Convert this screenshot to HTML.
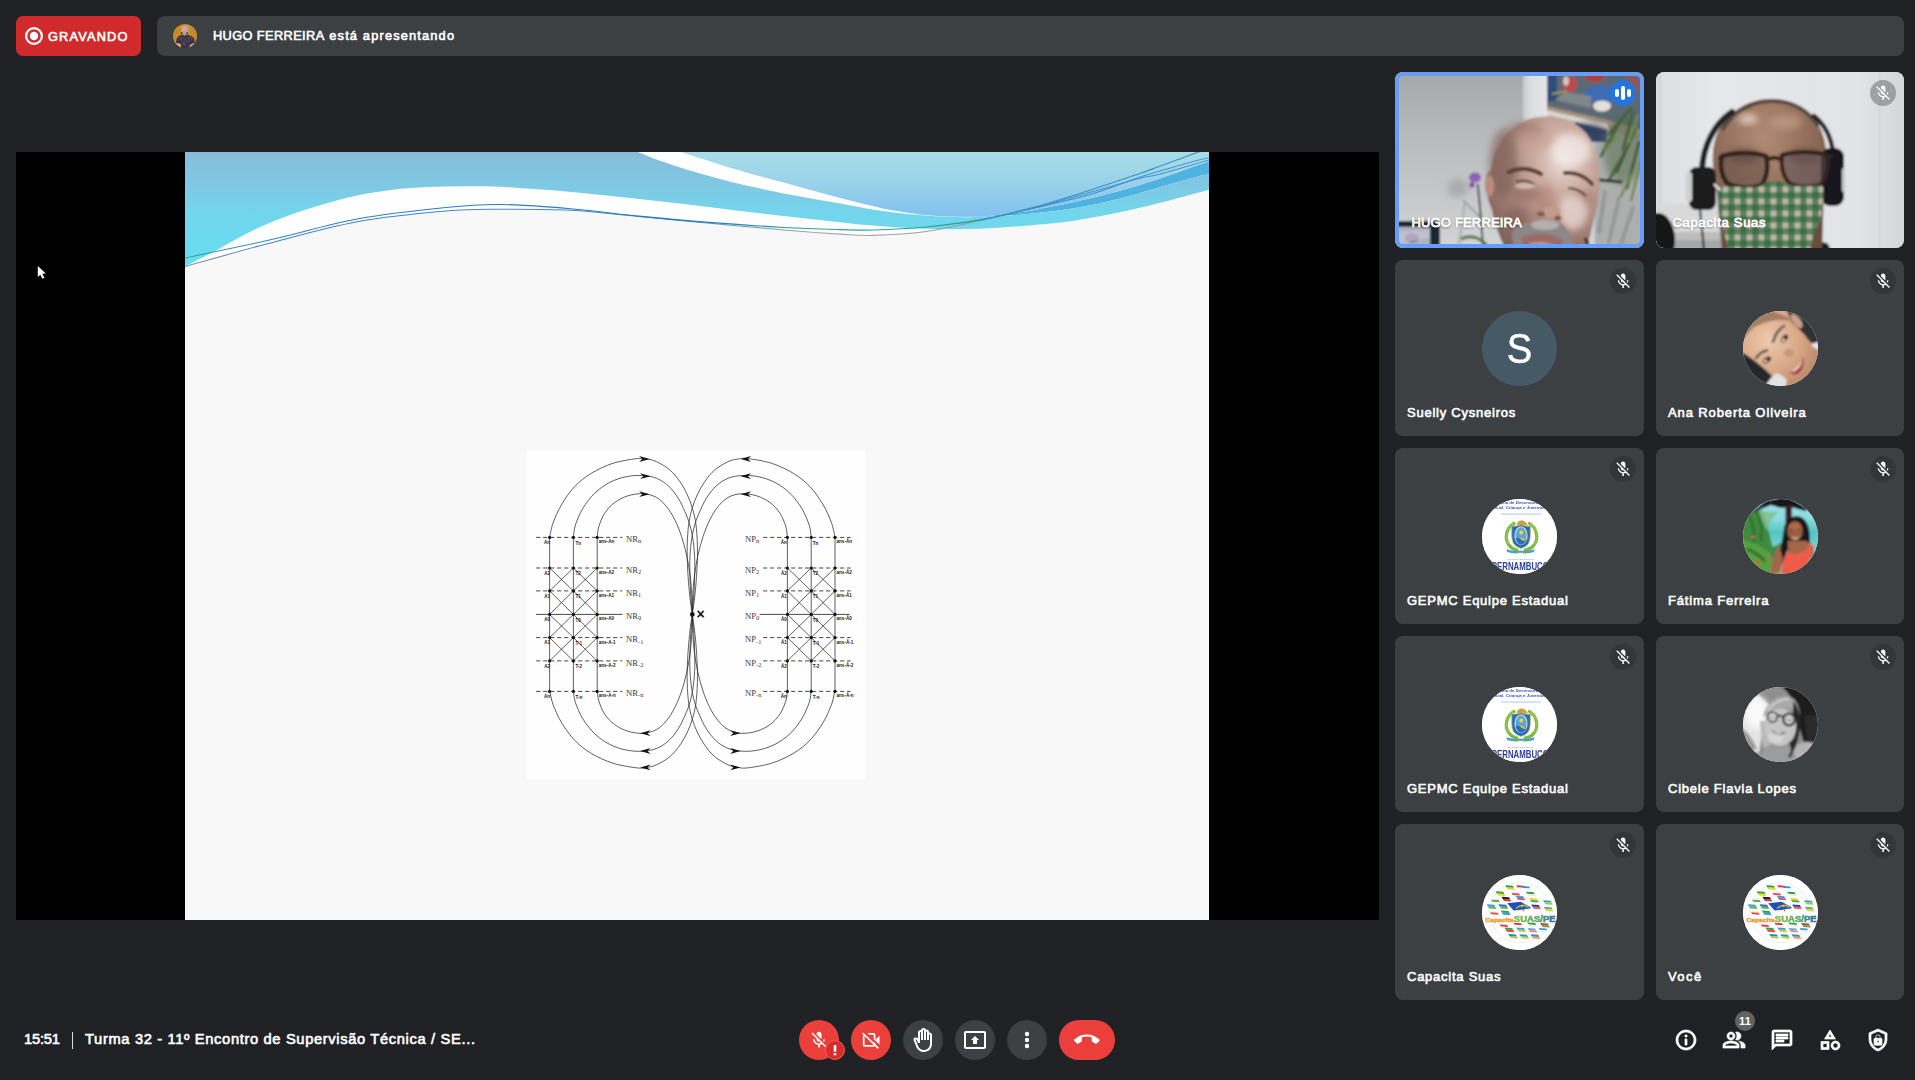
<!DOCTYPE html>
<html lang="pt-BR">
<head>
<meta charset="utf-8">
<title>Meet - Turma 32</title>
<style>
*{box-sizing:border-box;margin:0;padding:0}
html,body{width:1915px;height:1080px;overflow:hidden;background:#202124}
body{position:relative;font-family:"Liberation Sans",sans-serif;color:#fff;-webkit-font-smoothing:antialiased}
.abs{position:absolute}
.med{-webkit-text-stroke:0.6px currentColor}
/* top bar */
#rec{left:16px;top:16px;width:125px;height:40px;background:#d02a2c;border-radius:7px}
#rec svg{position:absolute;left:9px;top:11px}
#rec span{position:absolute;left:32px;top:11.8px;font-size:12.8px;line-height:18px;white-space:nowrap}
#pres{left:157px;top:16px;width:1747px;height:40px;background:#3c4043;border-radius:8px}
#pres .av{position:absolute;left:16px;top:8px;width:24px;height:24px;border-radius:50%;overflow:hidden}
#pres>span{position:absolute;left:56px;top:10.8px;font-size:12.8px;line-height:18px;white-space:nowrap}
/* main */
#main{left:16px;top:152px;width:1363px;height:768px;background:#000;overflow:hidden}
#slide{position:absolute;left:169.4px;top:0;width:1024px;height:768px;background:#f8f8f9}
/* tiles */
.tile.c2{width:248px}
.tile.c2 .avt{left:86.5px}
.tile{position:absolute;width:248.8px;height:176px;border-radius:8px;background:#3c4043;overflow:hidden}
.tile .nm{position:absolute;left:12px;bottom:14.5px;font-size:13px;line-height:18px;white-space:nowrap;color:#fff}
.tile .mic{position:absolute;right:7.5px;top:8px;width:26px;height:26px;border-radius:50%;background:rgba(32,33,36,.32)}
.tile .mic svg{position:absolute;left:3.9px;top:3.9px}
.tile .avt{position:absolute;left:87px;top:50.5px;width:75px;height:75px;border-radius:50%;overflow:hidden;background:#fff}
.tile .avt svg{display:block}
.tile .ini{position:absolute;left:0;top:0;width:75px;height:75px;line-height:75.4px;text-align:center;font-size:43.4px;color:#fff;transform:scaleX(.88);-webkit-text-stroke:.5px #fff}
.tile.vid{background:#d8d8da}
.tile .vn{left:16.5px;bottom:16.4px;-webkit-text-stroke:.85px #fff;text-shadow:0 1px 2px rgba(0,0,0,.6),0 0 2px rgba(0,0,0,.3)}
.tile .ring{position:absolute;inset:0;border:4px solid #669df6;border-radius:8px}
.tile .spk{position:absolute;right:7.5px;top:8px;width:26px;height:26px;border-radius:50%;background:#2675df}
.tile .spk i{position:absolute;width:4px;border-radius:2px;background:#fff}
.tile .spk i:nth-child(1){left:5px;top:9px;height:8px}
.tile .spk i:nth-child(2){left:11px;top:6px;height:14px}
.tile .spk i:nth-child(3){left:17px;top:9px;height:8px}
/* bottom */
#clock{left:24px;top:1029.4px;font-size:14.7px;line-height:20px;white-space:nowrap}
#sep{left:72px;top:1032px;width:1px;height:17px;background:#dadce0}
#title{left:85px;top:1029.4px;font-size:14.7px;line-height:20px;white-space:nowrap}
.cb{position:absolute;top:1020px;width:40px;height:40px;border-radius:50%;background:#3c4043}
.cb.red{background:#ea3f3b}
.cb svg{position:absolute;left:8px;top:8px}
.ri{position:absolute;top:1028px;width:24px;height:24px}
.ri path{stroke:#fff;stroke-width:.7;stroke-linejoin:round}
.cb svg path,.cb svg circle{stroke-linejoin:round}
</style>
</head>
<body>

<!-- TOP BAR -->
<div id="rec" class="abs">
<svg width="18" height="18" viewBox="0 0 18 18"><circle cx="9" cy="9" r="7.9" fill="none" stroke="#fff" stroke-width="2.2"/><circle cx="9" cy="9" r="4.2" fill="#fff"/></svg>
<span class="med" style="letter-spacing:1.16px">GRAVANDO</span>
</div>
<div id="pres" class="abs">
<div class="av"><svg width="24" height="24" viewBox="0 0 24 24" style="display:block;filter:blur(.45px)"><rect width="24" height="24" fill="#c68a2a"/><rect x="14.500" y="1" width="2.500" height="10" fill="#b89a58"/><ellipse cx="11.500" cy="5.800" rx="3.300" ry="4.300" fill="#d6a493"/><ellipse cx="11.600" cy="8.800" rx="2.600" ry="2" fill="#a8a4a2"/><path d="M8.500 8L9 10M14.500 8L14 10" stroke="#2a2222" stroke-width="1"/><path d="M3.500 15C5 12 8 11 9.500 10.500L11.500 12L13.800 10.500C16 11 20 12 21.500 15.500L22 19L17 21L16 24H8L7.500 20L3 19Z" fill="#3a3446"/><path d="M6 14L9 16M12 15L15 18M16 13L19 15M9 19L13 21" stroke="#7a4a6a" stroke-width="1"/><path d="M8 13L10 14M14 13L17 17M10 17L12 19" stroke="#3a6a58" stroke-width=".900"/><path d="M3 19L7.500 20L8 24H5Z" fill="#e0a98c"/><path d="M17 21L22 18.500L21 22L16.500 24Z" fill="#e0a98c"/></svg></div>
<span class="med"><span style="letter-spacing:0.376px">HUGO FERREIRA</span><span style="letter-spacing:1.171px"> está apresentando</span></span>
</div>

<!-- MAIN PRESENTATION -->
<div id="main" class="abs">
<div id="slide"><svg width="1024" height="768" viewBox="0 0 1024 768" style="display:block;position:absolute;left:0;top:0">
<defs>
<linearGradient id="gA" x1="0" y1="0" x2="0" y2="1"><stop offset="0" stop-color="#87bcda"/><stop offset=".3" stop-color="#7fc9e4"/><stop offset=".55" stop-color="#72d6ec"/><stop offset="1" stop-color="#66def2"/></linearGradient>
<linearGradient id="gA2" x1="0" y1="0" x2="1" y2="0"><stop offset="0" stop-color="#66def2" stop-opacity=".0"/><stop offset=".55" stop-color="#78d2ea" stop-opacity=".0"/><stop offset="1" stop-color="#82d0e8" stop-opacity=".5"/></linearGradient>
<linearGradient id="gB" x1="0" y1="0" x2="0" y2="1"><stop offset="0" stop-color="#a9dee7"/><stop offset=".5" stop-color="#98d1ea"/><stop offset="1" stop-color="#82c1ef"/></linearGradient>
<linearGradient id="gL" x1="0" y1="0" x2="1" y2="0"><stop offset="0" stop-color="#2fa58f"/><stop offset=".12" stop-color="#2f7fc4"/><stop offset=".5" stop-color="#2a78c0"/><stop offset=".66" stop-color="#25b08a"/><stop offset=".8" stop-color="#2a9a9c"/><stop offset="1" stop-color="#3a8fd0"/></linearGradient>
<linearGradient id="gL2" x1="0" y1="0" x2="1" y2="0"><stop offset="0" stop-color="#8a8f94"/><stop offset=".1" stop-color="#3b82c4"/><stop offset=".5" stop-color="#4a8fcb"/><stop offset=".62" stop-color="#a9a6a6"/><stop offset=".76" stop-color="#9a9a9e"/><stop offset=".84" stop-color="#3a86c8"/><stop offset="1" stop-color="#4a9ad6"/></linearGradient>
</defs>
<rect width="1024" height="768" fill="#f8f8f9"/>
<path d="M0.0 0.0L1024.0 0.0L1024.0 5.7L1024.0 5.7C1021.7 6.2 1021.0 6.0 1010.1 9.0C999.2 12.0 975.6 18.4 958.3 23.9C941.0 29.4 924.9 36.6 906.4 42.0C887.9 47.4 866.3 52.0 847.6 56.5C828.9 61.0 812.1 65.0 794.4 68.8C776.6 72.6 758.9 77.1 741.1 79.5C723.4 81.9 702.3 83.0 687.9 83.4C673.5 83.8 669.5 83.0 654.6 82.1C639.7 81.2 619.8 79.8 598.6 78.0C577.4 76.2 551.3 73.7 527.6 71.5C503.9 69.3 480.3 67.0 456.6 64.8C432.9 62.6 409.3 59.6 385.6 58.3C361.9 57.1 335.4 57.2 314.6 57.3C293.8 57.4 284.6 56.9 260.9 59.0C237.2 61.1 201.8 64.3 172.2 69.7C142.6 75.1 112.1 84.0 83.4 91.5C54.7 99.0 13.9 110.7 0.0 114.5L0.0 114.5Z" fill="#fefefe"/>
<path d="M764.6 64.6C769.6 64.6 783.5 65.1 794.4 64.5C805.3 63.9 819.9 62.3 829.9 61.0C839.9 59.7 844.0 58.9 854.6 56.9C865.2 54.9 880.5 52.0 893.5 49.1C906.5 46.2 919.4 43.0 932.4 39.4C945.4 35.9 958.4 32.0 971.3 27.8C984.3 23.6 1001.3 17.1 1010.1 14.1C1018.9 11.1 1021.7 10.3 1024.0 9.6L1024.0 21.9C1021.7 22.5 1018.9 22.8 1010.1 25.2C1001.3 27.6 984.3 32.5 971.3 36.2C958.4 39.9 945.4 44.0 932.4 47.2C919.4 50.4 906.5 53.3 893.5 55.6C880.5 57.9 865.2 59.6 854.6 60.8C844.0 62.0 839.9 62.3 829.9 63.0C819.9 63.7 806.2 64.7 794.4 65.0C782.6 65.3 764.8 64.7 758.9 64.6Z" fill="#4fb3e1"/>
<path d="M0.0 0.0L453.1 0.0C456.7 1.4 464.9 5.1 474.4 8.4C483.9 11.7 498.1 16.5 509.9 20.0C521.7 23.5 533.6 26.7 545.4 29.7C557.2 32.6 569.0 35.2 580.9 37.7C592.8 40.2 604.5 42.6 616.5 44.8C628.5 47.0 640.8 48.9 652.6 51.0C664.5 53.1 675.9 55.7 687.6 57.5C699.3 59.3 710.7 60.8 722.6 62.0C734.5 63.2 746.9 64.1 758.9 64.6C770.9 65.1 782.6 65.3 794.4 65.0C806.2 64.7 819.9 63.7 829.9 63.0C839.9 62.3 844.0 62.0 854.6 60.8C865.2 59.6 880.5 57.9 893.5 55.6C906.5 53.3 919.4 50.4 932.4 47.2C945.4 44.0 958.4 39.9 971.3 36.2C984.3 32.5 1001.3 27.6 1010.1 25.2C1018.9 22.8 1021.7 22.5 1024.0 21.9L1024.0 37.7C1021.7 38.3 1018.9 39.1 1010.1 41.4C1001.3 43.7 984.3 48.5 971.3 51.7C958.4 54.9 945.4 58.1 932.4 60.8C919.4 63.5 906.5 66.0 893.5 67.9C880.5 69.9 871.1 71.0 854.6 72.5C838.1 74.0 813.3 76.1 794.4 76.8C775.5 77.5 758.9 77.3 741.1 76.8C723.4 76.3 705.6 75.1 687.9 73.6C670.1 72.1 652.4 69.8 634.6 67.9C616.8 66.0 598.7 64.1 580.9 62.0C563.1 59.9 545.4 57.6 527.6 55.5C509.9 53.4 492.1 51.3 474.4 49.3C456.6 47.3 438.9 45.4 421.1 43.6C403.4 41.8 385.6 39.8 367.9 38.3C350.1 36.8 329.5 35.4 314.6 34.7C299.7 34.0 290.5 34.1 278.6 34.2C266.7 34.2 255.0 34.4 243.2 35.0C231.4 35.6 219.4 36.3 207.6 37.7C195.8 39.1 184.0 41.1 172.2 43.6C160.4 46.1 148.4 49.3 136.6 52.8C124.7 56.3 112.9 60.0 101.1 64.4C89.3 68.9 77.4 73.7 65.6 79.5C53.8 85.3 41.0 93.2 30.1 99.0C19.2 104.8 5.0 111.9 0.0 114.5Z" fill="url(#gA)"/>
<path d="M495.7 0.0C501.0 1.7 516.4 6.7 527.6 10.2C538.9 13.7 551.4 17.5 563.2 20.9C575.1 24.3 586.8 27.3 598.7 30.6C610.6 33.9 622.7 37.3 634.6 40.5C646.5 43.7 658.3 46.9 670.1 49.8C681.9 52.7 693.8 55.8 705.6 58.0C717.4 60.2 731.3 62.0 741.1 63.1C750.9 64.2 755.7 64.4 764.6 64.6C773.5 64.8 783.5 65.1 794.4 64.5C805.3 63.9 819.9 62.3 829.9 61.0C839.9 59.7 844.0 58.9 854.6 56.9C865.2 54.9 880.5 52.0 893.5 49.1C906.5 46.2 919.4 43.0 932.4 39.4C945.4 35.9 958.4 32.0 971.3 27.8C984.3 23.6 1001.3 17.1 1010.1 14.1C1018.9 11.1 1021.7 10.3 1024.0 9.6L1024.0 0.0Z" fill="url(#gB)"/>
<path d="M0.0 114.5C13.9 110.7 54.7 99.0 83.4 91.5C112.1 84.0 142.6 75.1 172.2 69.7C201.8 64.3 237.2 61.1 260.9 59.0C284.6 56.9 293.8 57.4 314.6 57.3C335.4 57.2 361.9 57.1 385.6 58.3C409.3 59.6 432.9 62.6 456.6 64.8C480.3 67.0 503.9 69.3 527.6 71.5C551.3 73.7 577.4 76.2 598.6 78.0C619.8 79.8 639.7 81.2 654.6 82.1C669.5 83.0 673.5 83.8 687.9 83.4C702.3 83.0 723.4 81.9 741.1 79.5C758.9 77.1 776.6 72.6 794.4 68.8C812.1 65.0 828.9 61.0 847.6 56.5C866.3 52.0 887.9 47.4 906.4 42.0C924.9 36.6 941.0 29.4 958.3 23.9C975.6 18.4 999.2 12.0 1010.1 9.0C1021.0 6.0 1021.7 6.2 1024.0 5.7" fill="none" stroke="url(#gL2)" stroke-width="1.1"/>
<path d="M0.0 106.0C13.9 103.0 54.7 94.8 83.4 88.3C112.1 81.8 142.6 72.5 172.2 67.0C201.8 61.5 237.2 57.9 260.9 55.5C284.6 53.1 293.8 52.3 314.6 52.5C335.4 52.7 361.9 54.7 385.6 56.7C409.3 58.7 432.9 62.1 456.6 64.4C480.3 66.7 503.9 68.8 527.6 70.6C551.3 72.4 577.4 74.3 598.6 75.5C619.8 76.7 639.7 77.2 654.6 77.6C669.5 78.0 673.5 78.4 687.9 78.0C702.3 77.6 723.4 76.7 741.1 75.0C758.9 73.3 776.6 71.2 794.4 67.9C812.1 64.7 829.9 60.2 847.6 55.5C865.4 50.8 883.1 45.1 900.9 39.5C918.7 33.9 941.9 25.9 954.2 21.7C966.5 17.5 965.3 17.7 974.6 14.3C983.9 10.9 1003.3 3.6 1010.1 1.2C1016.9 -1.2 1014.4 0.2 1015.3 0.0" fill="none" stroke="url(#gL)" stroke-width="1.1"/>
<path d="M794.4 68.5C803.3 66.5 829.9 60.7 847.6 56.2C865.4 51.7 883.1 46.4 900.9 41.5C918.7 36.6 941.9 29.7 954.2 26.5C966.5 23.3 963.0 25.3 974.6 22.2C986.2 19.1 1015.8 10.4 1024.0 8.0" fill="none" stroke="#3f8fd2" stroke-width="1"/>
<rect x="341.6" y="298.3" width="339" height="329" fill="#fefefe"/>
<g fill="none" stroke="#2b2b2b" stroke-width=".75" stroke-linecap="round">
<path d="M364.6 385.4C365.2 383.1 366.0 376.7 367.9 371.3C369.9 365.9 372.7 359.1 376.3 353.0C379.9 346.9 384.6 339.9 389.6 334.7C394.6 329.4 399.9 325.2 406.3 321.3C412.7 317.4 420.4 313.8 427.9 311.3C435.4 308.9 445.7 307.4 451.3 306.7C456.8 305.9 457.9 306.5 461.3 307.0C464.7 307.5 467.7 307.8 471.6 309.7C475.5 311.5 481.0 314.7 484.9 318.0C488.8 321.3 492.0 325.5 494.9 329.7C497.9 333.8 500.4 338.6 502.4 343.0C504.5 347.4 506.0 351.6 507.4 356.3C508.8 361.1 509.9 365.2 510.8 371.3C511.6 377.4 512.2 385.2 512.4 393.0C512.6 400.8 512.4 409.7 511.9 418.0C511.5 426.3 510.7 435.6 509.9 443.0C509.2 450.4 507.7 459.2 507.3 462.4"/>
<path d="M388.4 385.4C388.7 383.3 388.8 377.8 390.4 373.0C392.0 368.2 394.7 361.6 397.9 356.3C401.1 351.1 405.2 345.6 409.6 341.3C414.0 337.0 419.3 333.3 424.6 330.5C429.9 327.7 435.7 325.8 441.3 324.7C446.8 323.5 452.9 323.2 457.9 323.5C463.0 323.8 467.4 324.6 471.6 326.3C475.8 328.1 479.7 330.5 483.3 333.8C486.9 337.2 490.5 342.0 493.3 346.3C496.0 350.6 498.0 355.2 499.9 359.7C501.9 364.1 503.5 368.0 504.9 373.0C506.3 378.0 507.5 383.6 508.3 389.7C509.1 395.8 509.6 402.2 509.8 409.7C509.9 417.2 509.7 425.9 509.3 434.7C508.9 443.5 507.6 457.8 507.3 462.4"/>
<path d="M412.2 385.4C412.5 383.6 412.5 378.7 413.8 374.7C415.0 370.7 417.0 365.4 419.6 361.3C422.2 357.3 425.7 353.4 429.6 350.5C433.5 347.6 438.2 345.3 442.9 343.8C447.7 342.4 453.2 341.4 457.9 341.7C462.7 341.9 467.7 343.3 471.6 345.5C475.5 347.7 478.5 350.9 481.6 354.7C484.7 358.4 487.4 363.0 489.9 368.0C492.4 373.0 494.7 378.8 496.6 384.7C498.5 390.5 500.2 396.6 501.6 403.0C503.0 409.4 504.2 416.3 505.1 423.0C506.0 429.7 506.4 436.4 506.8 443.0C507.1 449.6 507.2 459.2 507.3 462.4"/>
<path d="M364.6 538.2C365.2 540.6 366.0 546.8 367.9 552.1C369.9 557.4 372.7 564.1 376.3 570.2C379.9 576.2 384.6 583.0 389.6 588.2C394.6 593.4 399.9 597.5 406.3 601.4C412.7 605.2 420.4 608.8 427.9 611.2C435.4 613.6 445.7 615.1 451.3 615.8C456.8 616.5 457.9 616.0 461.3 615.5C464.7 615.0 467.7 614.6 471.6 612.8C475.5 611.0 481.0 607.9 484.9 604.6C488.8 601.4 492.0 597.2 494.9 593.1C497.9 589.0 500.4 584.4 502.4 580.0C504.5 575.6 506.0 571.5 507.4 566.9C508.8 562.2 509.9 558.1 510.8 552.1C511.6 546.1 512.2 538.4 512.4 530.8C512.6 523.1 512.4 514.3 511.9 506.1C511.5 497.9 510.7 488.8 509.9 481.5C509.2 474.2 507.7 465.6 507.3 462.4"/>
<path d="M388.4 538.2C388.7 540.3 388.8 545.7 390.4 550.5C392.0 555.2 394.7 561.7 397.9 566.9C401.1 572.1 405.2 577.4 409.6 581.7C414.0 585.9 419.3 589.6 424.6 592.3C429.9 595.1 435.7 596.9 441.3 598.1C446.8 599.2 452.9 599.5 457.9 599.2C463.0 598.9 467.4 598.1 471.6 596.4C475.8 594.7 479.7 592.3 483.3 589.0C486.9 585.8 490.5 581.0 493.3 576.7C496.0 572.5 498.0 568.0 499.9 563.6C501.9 559.2 503.5 555.4 504.9 550.5C506.3 545.5 507.5 540.1 508.3 534.0C509.1 528.0 509.6 521.7 509.8 514.3C509.9 507.0 509.7 498.4 509.3 489.7C508.9 481.1 507.6 467.0 507.3 462.4"/>
<path d="M412.2 538.2C412.5 540.0 412.5 544.9 413.8 548.8C415.0 552.8 417.0 558.0 419.6 562.0C422.2 565.9 425.7 569.7 429.6 572.6C433.5 575.5 438.2 577.7 442.9 579.2C447.7 580.6 453.2 581.6 457.9 581.3C462.7 581.0 467.7 579.7 471.6 577.5C475.5 575.4 478.5 572.2 481.6 568.5C484.7 564.8 487.4 560.3 489.9 555.4C492.4 550.5 494.7 544.7 496.6 539.0C498.5 533.2 500.2 527.2 501.6 520.9C503.0 514.6 504.2 507.8 505.1 501.2C506.0 494.6 506.4 488.0 506.8 481.5C507.1 475.0 507.2 465.6 507.3 462.4"/>
<path d="M650.0 385.4C649.4 383.1 648.6 376.7 646.7 371.3C644.7 365.9 641.9 359.1 638.3 353.0C634.7 346.9 630.0 339.9 625.0 334.7C620.0 329.4 614.7 325.2 608.3 321.3C601.9 317.4 594.2 313.8 586.7 311.3C579.2 308.9 568.9 307.4 563.3 306.7C557.8 305.9 556.7 306.5 553.3 307.0C549.9 307.5 546.9 307.8 543.0 309.7C539.1 311.5 533.6 314.7 529.7 318.0C525.8 321.3 522.6 325.5 519.7 329.7C516.8 333.8 514.3 338.6 512.2 343.0C510.1 347.4 508.6 351.6 507.2 356.3C505.8 361.1 504.7 365.2 503.8 371.3C503.0 377.4 502.4 385.2 502.2 393.0C502.0 400.8 502.3 409.7 502.7 418.0C503.1 426.3 503.9 435.6 504.7 443.0C505.4 450.4 506.9 459.2 507.3 462.4"/>
<path d="M626.2 385.4C625.9 383.3 625.8 377.8 624.2 373.0C622.6 368.2 619.9 361.6 616.7 356.3C613.5 351.1 609.4 345.6 605.0 341.3C600.6 337.0 595.3 333.3 590.0 330.5C584.7 327.7 578.9 325.8 573.3 324.7C567.8 323.5 561.7 323.2 556.7 323.5C551.6 323.8 547.2 324.6 543.0 326.3C538.8 328.1 534.9 330.5 531.3 333.8C527.7 337.2 524.1 342.0 521.3 346.3C518.6 350.6 516.6 355.2 514.7 359.7C512.7 364.1 511.1 368.0 509.7 373.0C508.3 378.0 507.1 383.6 506.3 389.7C505.5 395.8 505.0 402.2 504.8 409.7C504.7 417.2 504.9 425.9 505.3 434.7C505.7 443.5 507.0 457.8 507.3 462.4"/>
<path d="M602.4 385.4C602.1 383.6 602.1 378.7 600.8 374.7C599.6 370.7 597.6 365.4 595.0 361.3C592.4 357.3 588.9 353.4 585.0 350.5C581.1 347.6 576.4 345.3 571.7 343.8C566.9 342.4 561.4 341.4 556.7 341.7C551.9 341.9 546.9 343.3 543.0 345.5C539.1 347.7 536.1 350.9 533.0 354.7C529.9 358.4 527.2 363.0 524.7 368.0C522.2 373.0 519.9 378.8 518.0 384.7C516.1 390.5 514.4 396.6 513.0 403.0C511.6 409.4 510.4 416.3 509.5 423.0C508.6 429.7 508.2 436.4 507.8 443.0C507.5 449.6 507.4 459.2 507.3 462.4"/>
<path d="M650.0 538.2C649.4 540.6 648.6 546.8 646.7 552.1C644.7 557.4 641.9 564.1 638.3 570.2C634.7 576.2 630.0 583.0 625.0 588.2C620.0 593.4 614.7 597.5 608.3 601.4C601.9 605.2 594.2 608.8 586.7 611.2C579.2 613.6 568.9 615.1 563.3 615.8C557.8 616.5 556.7 616.0 553.3 615.5C549.9 615.0 546.9 614.6 543.0 612.8C539.1 611.0 533.6 607.9 529.7 604.6C525.8 601.4 522.6 597.2 519.7 593.1C516.8 589.0 514.3 584.4 512.2 580.0C510.1 575.6 508.6 571.5 507.2 566.9C505.8 562.2 504.7 558.1 503.8 552.1C503.0 546.1 502.4 538.4 502.2 530.8C502.0 523.1 502.3 514.3 502.7 506.1C503.1 497.9 503.9 488.8 504.7 481.5C505.4 474.2 506.9 465.6 507.3 462.4"/>
<path d="M626.2 538.2C625.9 540.3 625.8 545.7 624.2 550.5C622.6 555.2 619.9 561.7 616.7 566.9C613.5 572.1 609.4 577.4 605.0 581.7C600.6 585.9 595.3 589.6 590.0 592.3C584.7 595.1 578.9 596.9 573.3 598.1C567.8 599.2 561.7 599.5 556.7 599.2C551.6 598.9 547.2 598.1 543.0 596.4C538.8 594.7 534.9 592.3 531.3 589.0C527.7 585.8 524.1 581.0 521.3 576.7C518.6 572.5 516.6 568.0 514.7 563.6C512.7 559.2 511.1 555.4 509.7 550.5C508.3 545.5 507.1 540.1 506.3 534.0C505.5 528.0 505.0 521.7 504.8 514.3C504.7 507.0 504.9 498.4 505.3 489.7C505.7 481.1 507.0 467.0 507.3 462.4"/>
<path d="M602.4 538.2C602.1 540.0 602.1 544.9 600.8 548.8C599.6 552.8 597.6 558.0 595.0 562.0C592.4 565.9 588.9 569.7 585.0 572.6C581.1 575.5 576.4 577.7 571.7 579.2C566.9 580.6 561.4 581.6 556.7 581.3C551.9 581.0 546.9 579.7 543.0 577.5C539.1 575.4 536.1 572.2 533.0 568.5C529.9 564.8 527.2 560.3 524.7 555.4C522.2 550.5 519.9 544.7 518.0 539.0C516.1 533.2 514.4 527.2 513.0 520.9C511.6 514.6 510.4 507.8 509.5 501.2C508.6 494.6 508.2 488.0 507.8 481.5C507.5 475.0 507.4 465.6 507.3 462.4"/>
<path d="M412.2 385.4V539.4"/>
<path d="M388.4 385.4V539.4"/>
<path d="M364.6 385.4V539.4"/>
<path d="M412.2 416.0L388.4 438.9M388.4 416.0L412.2 438.9"/>
<path d="M388.4 416.0L364.6 438.9M364.6 416.0L388.4 438.9"/>
<path d="M412.2 438.9L388.4 462.4M388.4 438.9L412.2 462.4"/>
<path d="M388.4 438.9L364.6 462.4M364.6 438.9L388.4 462.4"/>
<path d="M412.2 462.4L388.4 485.6M388.4 462.4L412.2 485.6"/>
<path d="M388.4 462.4L364.6 485.6M364.6 462.4L388.4 485.6"/>
<path d="M412.2 485.6L388.4 508.9M388.4 485.6L412.2 508.9"/>
<path d="M388.4 485.6L364.6 508.9M364.6 485.6L388.4 508.9"/>
<path d="M602.4 385.4V539.4"/>
<path d="M626.2 385.4V539.4"/>
<path d="M650.0 385.4V539.4"/>
<path d="M602.4 416.0L626.2 438.9M626.2 416.0L602.4 438.9"/>
<path d="M626.2 416.0L650.0 438.9M650.0 416.0L626.2 438.9"/>
<path d="M602.4 438.9L626.2 462.4M626.2 438.9L602.4 462.4"/>
<path d="M626.2 438.9L650.0 462.4M650.0 438.9L626.2 462.4"/>
<path d="M602.4 462.4L626.2 485.6M626.2 462.4L602.4 485.6"/>
<path d="M626.2 462.4L650.0 485.6M650.0 462.4L626.2 485.6"/>
<path d="M602.4 485.6L626.2 508.9M626.2 485.6L602.4 508.9"/>
<path d="M626.2 485.6L650.0 508.9M650.0 485.6L626.2 508.9"/>
</g>
<g fill="none" stroke="#3c3c3c" stroke-width=".95" stroke-dasharray="4.2 2.8">
<path d="M351.1 385.4H437.1"/>
<path d="M578.1 385.4H665.6"/>
<path d="M351.1 416.0H437.1"/>
<path d="M578.1 416.0H665.6"/>
<path d="M351.1 438.9H437.1"/>
<path d="M578.1 438.9H665.6"/>
<path d="M351.1 485.6H437.1"/>
<path d="M578.1 485.6H665.6"/>
<path d="M351.1 508.9H437.1"/>
<path d="M578.1 508.9H665.6"/>
<path d="M351.1 539.4H437.1"/>
<path d="M578.1 539.4H665.6"/>
</g>
<g fill="none" stroke="#333" stroke-width=".9"><path d="M351.1 462.4H437.6"/><path d="M574.6 462.4H664.6"/></g>
<g fill="#111">
<circle cx="412.2" cy="385.4" r="1.55"/>
<circle cx="412.2" cy="416.0" r="1.55"/>
<circle cx="412.2" cy="438.9" r="1.55"/>
<circle cx="412.2" cy="462.4" r="1.55"/>
<circle cx="412.2" cy="485.6" r="1.55"/>
<circle cx="412.2" cy="508.9" r="1.55"/>
<circle cx="412.2" cy="539.4" r="1.55"/>
<circle cx="388.4" cy="385.4" r="1.55"/>
<circle cx="388.4" cy="416.0" r="1.55"/>
<circle cx="388.4" cy="438.9" r="1.55"/>
<circle cx="388.4" cy="462.4" r="1.55"/>
<circle cx="388.4" cy="485.6" r="1.55"/>
<circle cx="388.4" cy="508.9" r="1.55"/>
<circle cx="388.4" cy="539.4" r="1.55"/>
<circle cx="364.6" cy="385.4" r="1.55"/>
<circle cx="364.6" cy="416.0" r="1.55"/>
<circle cx="364.6" cy="438.9" r="1.55"/>
<circle cx="364.6" cy="462.4" r="1.55"/>
<circle cx="364.6" cy="485.6" r="1.55"/>
<circle cx="364.6" cy="508.9" r="1.55"/>
<circle cx="364.6" cy="539.4" r="1.55"/>
<circle cx="602.4" cy="385.4" r="1.55"/>
<circle cx="602.4" cy="416.0" r="1.55"/>
<circle cx="602.4" cy="438.9" r="1.55"/>
<circle cx="602.4" cy="462.4" r="1.55"/>
<circle cx="602.4" cy="485.6" r="1.55"/>
<circle cx="602.4" cy="508.9" r="1.55"/>
<circle cx="602.4" cy="539.4" r="1.55"/>
<circle cx="626.2" cy="385.4" r="1.55"/>
<circle cx="626.2" cy="416.0" r="1.55"/>
<circle cx="626.2" cy="438.9" r="1.55"/>
<circle cx="626.2" cy="462.4" r="1.55"/>
<circle cx="626.2" cy="485.6" r="1.55"/>
<circle cx="626.2" cy="508.9" r="1.55"/>
<circle cx="626.2" cy="539.4" r="1.55"/>
<circle cx="650.0" cy="385.4" r="1.55"/>
<circle cx="650.0" cy="416.0" r="1.55"/>
<circle cx="650.0" cy="438.9" r="1.55"/>
<circle cx="650.0" cy="462.4" r="1.55"/>
<circle cx="650.0" cy="485.6" r="1.55"/>
<circle cx="650.0" cy="508.9" r="1.55"/>
<circle cx="650.0" cy="539.4" r="1.55"/>
<circle cx="507.3" cy="462.4" r="2.3"/>
</g>
<path d="M464.6 307.0l-10.5 -2.9l3.2 2.9l-3.2 2.9z" fill="#111"/>
<path d="M555.6 307.0l10.5 -2.9l-3.2 2.9l3.2 2.9z" fill="#111"/>
<path d="M455.1 615.4l10.5 -2.9l-3.2 2.9l3.2 2.9z" fill="#111"/>
<path d="M555.6 615.4l-10.5 -2.9l3.2 2.9l-3.2 2.9z" fill="#111"/>
<path d="M465.6 324.2l-10.5 -2.9l3.2 2.9l-3.2 2.9z" fill="#111"/>
<path d="M555.6 324.2l10.5 -2.9l-3.2 2.9l3.2 2.9z" fill="#111"/>
<path d="M455.1 599.0l10.5 -2.9l-3.2 2.9l3.2 2.9z" fill="#111"/>
<path d="M555.6 599.0l-10.5 -2.9l3.2 2.9l-3.2 2.9z" fill="#111"/>
<path d="M464.6 342.2l-10.5 -2.9l3.2 2.9l-3.2 2.9z" fill="#111"/>
<path d="M555.6 342.2l10.5 -2.9l-3.2 2.9l3.2 2.9z" fill="#111"/>
<path d="M455.1 581.2l10.5 -2.9l-3.2 2.9l3.2 2.9z" fill="#111"/>
<path d="M555.6 581.2l-10.5 -2.9l3.2 2.9l-3.2 2.9z" fill="#111"/>
<g font-family="'Liberation Serif',serif" font-size="8.6" fill="#3a3a3a">
<text x="441.1" y="390.0">NR<tspan font-size="6.4" dy="1.4">n</tspan></text>
<text x="560.1" y="390.0">NP<tspan font-size="6.4" dy="1.4">n</tspan></text>
<text x="441.1" y="420.6">NR<tspan font-size="6.4" dy="1.4">2</tspan></text>
<text x="560.1" y="420.6">NP<tspan font-size="6.4" dy="1.4">2</tspan></text>
<text x="441.1" y="443.5">NR<tspan font-size="6.4" dy="1.4">1</tspan></text>
<text x="560.1" y="443.5">NP<tspan font-size="6.4" dy="1.4">1</tspan></text>
<text x="441.1" y="467.0">NR<tspan font-size="6.4" dy="1.4">0</tspan></text>
<text x="560.1" y="467.0">NP<tspan font-size="6.4" dy="1.4">0</tspan></text>
<text x="441.1" y="490.2">NR<tspan font-size="6.4" dy="1.4">-1</tspan></text>
<text x="560.1" y="490.2">NP<tspan font-size="6.4" dy="1.4">-1</tspan></text>
<text x="441.1" y="513.5">NR<tspan font-size="6.4" dy="1.4">-2</tspan></text>
<text x="560.1" y="513.5">NP<tspan font-size="6.4" dy="1.4">-2</tspan></text>
<text x="441.1" y="544.0">NR<tspan font-size="6.4" dy="1.4">-n</tspan></text>
<text x="560.1" y="544.0">NP<tspan font-size="6.4" dy="1.4">-n</tspan></text>
</g>
<g font-family="'Liberation Sans',sans-serif" font-size="4.6" font-weight="bold" fill="#222">
<text x="365.1" y="392.0" text-anchor="end">An</text>
<text x="390.4" y="392.8">Tn</text>
<text x="413.7" y="391.4">ans-An</text>
<text x="601.9" y="392.0" text-anchor="end">Ān</text>
<text x="627.7" y="392.8">Tn</text>
<text x="651.5" y="391.4">ans-Ān</text>
<text x="365.1" y="422.6" text-anchor="end">A2</text>
<text x="390.4" y="423.4">T2</text>
<text x="413.7" y="422.0">ans-A2</text>
<text x="601.9" y="422.6" text-anchor="end">Ā2</text>
<text x="627.7" y="423.4">T2</text>
<text x="651.5" y="422.0">ans-Ā2</text>
<text x="365.1" y="445.5" text-anchor="end">A1</text>
<text x="390.4" y="446.3">T1</text>
<text x="413.7" y="444.9">ans-A1</text>
<text x="601.9" y="445.5" text-anchor="end">Ā1</text>
<text x="627.7" y="446.3">T1</text>
<text x="651.5" y="444.9">ans-Ā1</text>
<text x="365.1" y="469.0" text-anchor="end">A0</text>
<text x="390.4" y="469.8">T0</text>
<text x="413.7" y="468.4">ans-A0</text>
<text x="601.9" y="469.0" text-anchor="end">Ā0</text>
<text x="627.7" y="469.8">T0</text>
<text x="651.5" y="468.4">ans-Ā0</text>
<text x="365.1" y="492.2" text-anchor="end">A1</text>
<text x="390.4" y="493.0">T-1</text>
<text x="413.7" y="491.6">ans-A-1</text>
<text x="601.9" y="492.2" text-anchor="end">Ā1</text>
<text x="627.7" y="493.0">T-1</text>
<text x="651.5" y="491.6">ans-Ā-1</text>
<text x="365.1" y="515.5" text-anchor="end">A2</text>
<text x="390.4" y="516.3">T-2</text>
<text x="413.7" y="514.9">ans-A-2</text>
<text x="601.9" y="515.5" text-anchor="end">Ā2</text>
<text x="627.7" y="516.3">T-2</text>
<text x="651.5" y="514.9">ans-Ā-2</text>
<text x="365.1" y="546.0" text-anchor="end">An</text>
<text x="390.4" y="546.8">T-n</text>
<text x="413.7" y="545.4">ans-A-n</text>
<text x="601.9" y="546.0" text-anchor="end">Ān</text>
<text x="627.7" y="546.8">T-n</text>
<text x="651.5" y="545.4">ans-Ā-n</text>
</g>
<text x="511.6" y="467.0" font-family="'Liberation Sans',sans-serif" font-size="14" font-weight="bold" fill="#111">×</text>
</svg></div>
<svg class="abs" style="left:16px;top:108px;filter:blur(.3px)" width="20" height="24" viewBox="16 108 20 24"><path d="M21.800 114L21.800 125L24.300 122.700L26.400 126.800L28.400 125.800L26.300 121.800L29.800 121.600Z" fill="#fff"/></svg>
</div>

<!-- TILES -->
<div class="tile vid" style="left:1395px;top:72px"><svg class="abs" style="left:0;top:0" width="248.500" height="176" viewBox="0 0 248.500 176">
<defs>
<filter id="hb1" x="-10%" y="-10%" width="120%" height="120%"><feGaussianBlur stdDeviation="1.100"/></filter>
<filter id="hb3" x="-30%" y="-30%" width="160%" height="160%"><feGaussianBlur stdDeviation="3.500"/></filter>
<filter id="hb6" x="-40%" y="-40%" width="180%" height="180%"><feGaussianBlur stdDeviation="7"/></filter>
<linearGradient id="hw" x1="0" y1="0" x2="0" y2="1"><stop offset="0" stop-color="#a5a6a7"/><stop offset=".45" stop-color="#bcbebf"/><stop offset="1" stop-color="#d3d5d7"/></linearGradient>
<linearGradient id="hp" x1="0" y1="0" x2="1" y2="0"><stop offset="0" stop-color="#c9cacc"/><stop offset=".3" stop-color="#dcdde0"/><stop offset="1" stop-color="#e6e6ea"/></linearGradient>
<radialGradient id="hs" cx=".68" cy=".32" r=".8"><stop offset="0" stop-color="#ece0dd"/><stop offset=".28" stop-color="#cfb0a5"/><stop offset=".6" stop-color="#ad897d"/><stop offset="1" stop-color="#7d6058"/></radialGradient>
<clipPath id="hc"><rect x="0" y="0" width="248.500" height="176" rx="8"/></clipPath>
</defs>
<g clip-path="url(#hc)">
<g filter="url(#hb1)">
<rect x="-5" y="-5" width="260" height="186" fill="url(#hw)"/>
<rect x="200" y="40" width="55" height="140" fill="#adaeae"/>
<rect x="128" y="-5" width="25" height="186" fill="url(#hp)"/>
<!-- painting -->
<path d="M152 -5H255V70L212 56L152 42Z" fill="#5b6975"/>
<path d="M152 34L212 48L255 60V70L212 57L152 43Z" fill="#a8937f"/>
<path d="M152 38L212 52L214 57L152 43Z" fill="#d9d6d0"/>
<rect x="153" y="2" width="9" height="27" fill="#2d4d7c"/>
<ellipse cx="175" cy="12" rx="7" ry="8" fill="#c0474a"/>
<ellipse cx="171" cy="9" rx="3" ry="5" fill="#d9c4c0"/>
<ellipse cx="200" cy="4" rx="10" ry="6" fill="#b33b3b"/>
<ellipse cx="206" cy="22" rx="17" ry="9" fill="#3d6cb3"/>
<ellipse cx="207" cy="34" rx="9" ry="5.500" fill="#e3dfda"/>
<path d="M160 28L196 36L196 24L170 20Z" fill="#80868a"/>
<path d="M157 22L172 19" stroke="#b9a13a" stroke-width="1.500"/>
<rect x="232" y="0" width="16" height="20" fill="#8a5a58"/>
<path d="M180 50L212 58V70H184Z" fill="#39476a"/>
<!-- plants right -->
<ellipse cx="228" cy="78" rx="20" ry="34" fill="#566a50" opacity=".55" filter="url(#hb3)"/>
<ellipse cx="196" cy="58" rx="14" ry="7" fill="#2c3a5c" opacity=".6" filter="url(#hb3)"/>
<g fill="none" stroke="#44603a" stroke-width="3" stroke-linecap="round">
<path d="M236 36L214 62M238 40L228 78M226 48L206 84M240 58L222 100M244 70L232 116M230 80L214 108"/>
</g>
<g fill="none" stroke="#6c8a4c" stroke-width="2.500" stroke-linecap="round">
<path d="M243 44L234 70M246 90L236 128M238 100L226 124M222 64L210 78"/>
</g>
<path d="M205 108L226 110" stroke="#2c3430" stroke-width="3" stroke-linecap="round"/>
<g fill="none" stroke="#8d8f8f" stroke-width="4" stroke-linecap="round" opacity=".7"><path d="M210 120L204 160M224 126L214 170M238 136L226 172"/></g>
<!-- orchid and shadow -->
<ellipse cx="63" cy="116" rx="11" ry="9" fill="#a9abad" filter="url(#hb3)"/>
<path d="M70 130L64 172" stroke="#b4b6b8" stroke-width="3"/>
<path d="M68 128L86 146" stroke="#8f8a90" stroke-width="1.200"/>
<path d="M82.500 112C85 130 86 150 88 174" stroke="#3a3040" stroke-width="1.800" fill="none"/>
<ellipse cx="80" cy="105.500" rx="6" ry="5" fill="#8d62b8"/>
<ellipse cx="77" cy="113" rx="2.500" ry="3" fill="#7a52a6"/>
<path d="M66 167C76 162 86 166 92 174" stroke="#56703f" stroke-width="3" fill="none"/>
<!-- frame bottom-left -->
<rect x="2" y="149" width="43" height="30" fill="#1d2535"/>
<rect x="2" y="155" width="33" height="24" fill="#aeb4c2"/>
<ellipse cx="17" cy="166" rx="7" ry="5" fill="#8d6f96"/>
<path d="M2 160L34 158L34 166L2 172Z" fill="#c9ccd6" opacity=".6"/>
<!-- head -->
<path d="M96 98C97 84 104 66 118 56C130 47 142 44 152 44.500C166 45 180 49 190 60C198 69 203 84 204 98C205 112 204 128 200 142C198 152 195 162 191 180H112C106 168 100 154 97 138C93 128 90 118 91 106C92 101 94 99 96 98Z" fill="url(#hs)"/>
<ellipse cx="108" cy="92" rx="14" ry="34" fill="#7d5f57" opacity=".6" filter="url(#hb3)"/><ellipse cx="128" cy="60" rx="20" ry="10" fill="#8d6e64" opacity=".5" filter="url(#hb3)"/><ellipse cx="132" cy="122" rx="16" ry="8" fill="#8a6258" opacity=".5" filter="url(#hb3)"/><ellipse cx="186" cy="126" rx="12" ry="6" fill="#8a6258" opacity=".45" filter="url(#hb3)"/><ellipse cx="122" cy="148" rx="12" ry="14" fill="#7a5a52" opacity=".5" filter="url(#hb3)"/>
<ellipse cx="94.500" cy="114" rx="4.500" ry="11" fill="#b98a80"/>
<ellipse cx="176" cy="78" rx="20" ry="16" fill="#f4ebe8" opacity=".75" filter="url(#hb3)"/>
<ellipse cx="178" cy="140" rx="14" ry="18" fill="#efe2de" opacity=".7" filter="url(#hb3)"/>
<ellipse cx="140" cy="68" rx="18" ry="10" fill="#c9a496" opacity=".6" filter="url(#hb3)"/>
<!-- brows/eyes -->
<path d="M114 100C124 95 136 96 146 102" stroke="#5a3d36" stroke-width="4.200" fill="none" stroke-linecap="round"/>
<path d="M170 101C180 100 190 104 197 112" stroke="#5a3d36" stroke-width="3.800" fill="none" stroke-linecap="round"/>
<path d="M121 110C127 108 134 109 139 112" stroke="#4f3631" stroke-width="2" fill="none"/>
<path d="M173 116C180 116 186 119 191 124" stroke="#4f3631" stroke-width="2" fill="none"/>
<ellipse cx="130" cy="114" rx="10" ry="3" fill="#e0c6bc" opacity=".7"/>
<!-- nose -->
<ellipse cx="150" cy="128" rx="9" ry="16" fill="#b48578" opacity=".6" filter="url(#hb3)"/>
<ellipse cx="157" cy="140" rx="9" ry="6" fill="#c59a8e"/>
<ellipse cx="146" cy="142" rx="4" ry="2.200" fill="#7d564f"/>
<ellipse cx="163" cy="146" rx="3.500" ry="2.500" fill="#7d564f"/>
<!-- moustache/beard -->
<path d="M118 158C130 148 150 146 164 150C172 154 176 162 178 174L172 180H122C118 172 116 164 118 158Z" fill="#8e8787"/>
<ellipse cx="150" cy="153" rx="14" ry="5" fill="#b5afae"/>
<path d="M126 166C138 160 156 160 168 168L166 180H130Z" fill="#9a6a68"/>
<path d="M134 172C144 168 156 170 164 176L164 180H134Z" fill="#c79a96"/>
<path d="M190 166C193 170 194 174 192 180" stroke="#2c2422" stroke-width="3" fill="none"/>
</g>
</g>
</svg><div class="ring"></div><div class="spk"><i></i><i></i><i></i></div><div class="nm vn med" style="letter-spacing:0.16px">HUGO FERREIRA</div></div>
<div class="tile vid c2" style="left:1656px;top:72px"><svg class="abs" style="left:0;top:0" width="248" height="176" viewBox="0 0 248 176">
<defs>
<filter id="cb1" x="-10%" y="-10%" width="120%" height="120%"><feGaussianBlur stdDeviation="1"/></filter>
<filter id="cb3" x="-30%" y="-30%" width="160%" height="160%"><feGaussianBlur stdDeviation="3.500"/></filter>
<linearGradient id="cw" x1="0" y1="0" x2="1" y2="0"><stop offset="0" stop-color="#dcdde1"/><stop offset=".25" stop-color="#e6e7eb"/><stop offset=".8" stop-color="#e2e3e7"/><stop offset="1" stop-color="#d4d5d9"/></linearGradient>
<radialGradient id="cs" cx=".45" cy=".25" r=".8"><stop offset="0" stop-color="#b08a74"/><stop offset=".4" stop-color="#98745f"/><stop offset="1" stop-color="#694c3e"/></radialGradient>
<pattern id="plaid" width="12" height="12" patternUnits="userSpaceOnUse"><rect width="12" height="12" fill="#e9e7de"/><rect x="0" y="0" width="6.800" height="12" fill="#2a6636" opacity=".68"/><rect x="0" y="0" width="12" height="6.800" fill="#2a6636" opacity=".68"/><rect x="9.200" y="0" width=".500" height="12" fill="#b8343c" opacity=".6"/><rect x="0" y="9.200" width="12" height=".500" fill="#b8343c" opacity=".6"/></pattern>
<clipPath id="cc"><rect x="0" y="0" width="248" height="176" rx="8"/></clipPath>
</defs>
<g clip-path="url(#cc)">
<g filter="url(#cb1)">
<rect x="-5" y="-5" width="260" height="186" fill="url(#cw)"/>
<rect x="3" y="-5" width="1.500" height="140" fill="#c9cace"/>
<rect x="223" y="-5" width="1.200" height="186" fill="#cfd0d4"/>
<!-- desk -->
<path d="M-5 132H66V180H-5Z" fill="#d9d9da"/>
<path d="M-5 160H66V168H-5Z" fill="#bdbdbe"/>
<path d="M-5 168H66V180H-5Z" fill="#a7a7a8"/>
<!-- shoulder dark -->
<ellipse cx="2" cy="168" rx="17" ry="27" fill="#121214"/>
<path d="M150 180C154 170 164 168 172 172L176 180Z" fill="#1a1a1c"/>
<!-- head -->
<path d="M60 112C55 92 55 70 65 54C75 38 94 27 114 27C138 27 154 38 163 54C172 70 172 94 168 116L166 180H66Z" fill="url(#cs)"/>
<path d="M66 58C76 40 96 29 116 29C138 29 154 40 162 54" fill="none" stroke="#4a3c38" stroke-width="4" opacity=".8"/>
<ellipse cx="92" cy="47" rx="10" ry="5" fill="#ecd6cc" opacity=".85" filter="url(#cb3)"/>
<ellipse cx="130" cy="50" rx="16" ry="7" fill="#c9a48e" opacity=".6" filter="url(#cb3)"/>
<ellipse cx="88" cy="84" rx="16" ry="7" fill="#5d4236" opacity=".7" filter="url(#cb3)"/>
<ellipse cx="148" cy="84" rx="16" ry="7" fill="#5d4236" opacity=".7" filter="url(#cb3)"/>
<!-- headphones -->
<path d="M46 98C47 74 58 52 76 40" fill="none" stroke="#222226" stroke-width="6" stroke-linecap="round"/>
<path d="M158 44C168 52 175 64 177 80" fill="none" stroke="#222226" stroke-width="4.500" stroke-linecap="round"/>
<rect x="33" y="95" width="27" height="43" rx="8" fill="#1c1c1f"/>
<rect x="30" y="100" width="6" height="30" rx="3" fill="#cfcfd2"/>
<rect x="165" y="76" width="23" height="58" rx="9" fill="#19191c"/>
<rect x="186" y="96" width="3" height="24" rx="1.500" fill="#c9c9cc"/>
<path d="M44 137C45 150 47 164 48 180" fill="none" stroke="#222" stroke-width="2"/>
<!-- glasses -->
<path d="M66 84C80 80 98 80 110 84C113 96 110 110 104 114C92 117 76 116 70 110C65 102 64 92 66 84Z" fill="#5f5048" opacity=".5"/>
<path d="M126 83C140 79 158 79 171 83C174 95 170 108 164 113C152 116 138 115 132 110C126 102 125 92 126 83Z" fill="#5f5560" opacity=".5"/>
<path d="M66 84C80 80 98 80 110 84C113 96 110 110 104 114C92 117 76 116 70 110C65 102 64 92 66 84Z" fill="none" stroke="#33231f" stroke-width="4.600"/>
<path d="M126 83C140 79 158 79 171 83C174 95 170 108 164 113C152 116 138 115 132 110C126 102 125 92 126 83Z" fill="none" stroke="#33231f" stroke-width="4"/>
<path d="M110 88C116 85 121 85 126 88" fill="none" stroke="#33231f" stroke-width="4"/>
<path d="M62 86L66 86M171 85L177 84" stroke="#33231f" stroke-width="4"/>
<!-- mask -->
<path d="M62 116C76 112 92 118 104 114C112 108 122 108 132 112C144 116 158 112 167 114C168 130 166 146 160 158C157 166 155 172 154 180H72C72 170 68 162 66 152C63 140 62 128 62 116Z" fill="url(#plaid)"/>
<path d="M62 116C76 112 92 118 104 114C112 108 122 108 132 112C144 116 158 112 167 114C168 130 166 146 160 158C157 166 155 172 154 180H72C72 170 68 162 66 152C63 140 62 128 62 116Z" fill="#2d5a34" opacity=".18"/>
<path d="M58 112L64 118" stroke="#f4f4f4" stroke-width="2"/>
</g>
</g>
</svg><div class="mic" style="right:8px"><svg width="18.2" height="18.2" viewBox="0 0 24 24"><path fill="#fff" d="M19 11h-1.7c0 .74-.16 1.43-.43 2.05l1.23 1.23c.56-.98.9-2.09.9-3.28zm-4.02.17c0-.06.02-.11.02-.17V5c0-1.66-1.34-3-3-3S9 3.34 9 5v.18l5.98 5.99zM4.27 3L3 4.27l6.01 6.01V11c0 1.66 1.33 3 2.99 3 .22 0 .44-.03.65-.08l1.66 1.66c-.71.33-1.5.52-2.31.52-2.76 0-5.3-2.1-5.3-5.1H5c0 3.41 2.72 6.23 6 6.72V21h2v-3.28c.91-.13 1.77-.45 2.54-.9L19.73 21 21 19.73 4.27 3z"/></svg></div><div class="nm vn med" style="letter-spacing:0.704px">Capacita Suas</div></div>
<div class="tile" style="left:1395px;top:260px"><div class="avt" style="background:#455a64"><span class="ini">S</span></div><div class="mic" style="right:7.5px"><svg width="18.2" height="18.2" viewBox="0 0 24 24"><path fill="#fff" d="M19 11h-1.7c0 .74-.16 1.43-.43 2.05l1.23 1.23c.56-.98.9-2.09.9-3.28zm-4.02.17c0-.06.02-.11.02-.17V5c0-1.66-1.34-3-3-3S9 3.34 9 5v.18l5.98 5.99zM4.27 3L3 4.27l6.01 6.01V11c0 1.66 1.33 3 2.99 3 .22 0 .44-.03.65-.08l1.66 1.66c-.71.33-1.5.52-2.31.52-2.76 0-5.3-2.1-5.3-5.1H5c0 3.41 2.72 6.23 6 6.72V21h2v-3.28c.91-.13 1.77-.45 2.54-.9L19.73 21 21 19.73 4.27 3z"/></svg></div><div class="nm med" style="letter-spacing:0.761px">Suelly Cysneiros</div></div>
<div class="tile c2" style="left:1656px;top:260px"><div class="avt"><svg width="75" height="75" viewBox="0 0 75 75"><defs><filter id="ab" x="-20%" y="-20%" width="140%" height="140%"><feGaussianBlur stdDeviation=".800"/></filter><radialGradient id="as" cx=".35" cy=".4" r=".75"><stop offset="0" stop-color="#efc9ae"/><stop offset=".5" stop-color="#d9a988"/><stop offset="1" stop-color="#b07f62"/></radialGradient></defs>
<g filter="url(#ab)"><rect x="-3" y="-3" width="81" height="81" fill="url(#as)"/>
<path d="M43 -3L49 12L60 22L68 32L78 35V-3Z" fill="#2f3236"/>
<ellipse cx="53.500" cy="10" rx="4" ry="8.500" transform="rotate(-38 53.500 10)" fill="#c9a08a"/>
<path d="M68 33L78 30V40L70 36Z" fill="#e6e6e8"/>
<path d="M10 -3C24 -2 38 2 50 10C40 8 26 8 12 16C6 20 2 26 -3 34V-3Z" fill="#8a6a50" opacity=".7"/>
<path d="M-3 40C8 46 20 56 30 66C26 70 22 74 20 78H-3Z" fill="#26282b"/>
<path d="M22 78C24 70 30 64 34 62C38 64 42 66 44 70L42 78Z" fill="#e3e3e4"/>
<path d="M30 31C32 24 36 18 41 15" stroke="#5a5252" stroke-width="2.600" fill="none" stroke-linecap="round"/>
<path d="M13 47C16 43 20 40 24 39.500" stroke="#5a5252" stroke-width="2.600" fill="none" stroke-linecap="round"/>
<ellipse cx="41.500" cy="27.500" rx="4.600" ry="2.600" transform="rotate(-50 41.500 27.500)" fill="#4a2c24"/>
<ellipse cx="40.500" cy="29" rx="1.600" ry="1.400" fill="#e8e4e4"/>
<ellipse cx="24" cy="49" rx="4.600" ry="2.600" transform="rotate(-35 24 49)" fill="#4a2c24"/>
<ellipse cx="22.500" cy="50" rx="1.600" ry="1.300" fill="#e8e4e4"/>
<ellipse cx="46" cy="42" rx="5" ry="4" fill="#b98868" opacity=".6"/>
<path d="M46 61C52 62 59 57 60 46C62 52 60 60 54 63C51 64 48 63 46 61Z" fill="#b3324a"/>
<path d="M49 59.500C53 58 57 54 59 49C58 55 54 59 50 60.500Z" fill="#f4ece6"/>
</g></svg></div><div class="mic" style="right:8px"><svg width="18.2" height="18.2" viewBox="0 0 24 24"><path fill="#fff" d="M19 11h-1.7c0 .74-.16 1.43-.43 2.05l1.23 1.23c.56-.98.9-2.09.9-3.28zm-4.02.17c0-.06.02-.11.02-.17V5c0-1.66-1.34-3-3-3S9 3.34 9 5v.18l5.98 5.99zM4.27 3L3 4.27l6.01 6.01V11c0 1.66 1.33 3 2.99 3 .22 0 .44-.03.65-.08l1.66 1.66c-.71.33-1.5.52-2.31.52-2.76 0-5.3-2.1-5.3-5.1H5c0 3.41 2.72 6.23 6 6.72V21h2v-3.28c.91-.13 1.77-.45 2.54-.9L19.73 21 21 19.73 4.27 3z"/></svg></div><div class="nm med" style="letter-spacing:0.897px">Ana Roberta Oliveira</div></div>
<div class="tile" style="left:1395px;top:448px"><div class="avt"><svg width="75" height="75" viewBox="0 0 75 75" style="filter:blur(.35px)"><rect width="75" height="75" fill="#fff"/>
<g font-family="'Liberation Sans',sans-serif" font-weight="bold" fill="#3c50b4" text-anchor="middle"><text x="37.500" y="4.500" font-size="4.400">Secretaria de Desenvolvimento</text><text x="37.500" y="9.800" font-size="4.400">Social, Criança e Juventude</text></g>
<rect x="19" y="14.600" width="40" height=".900" fill="#9cc6e6"/>
<g fill="none" stroke="#7cba3c" stroke-width="3.200" stroke-linecap="round"><path d="M32 24.500C24 29 22 40 27 46C29 49 32 50.500 35 51"/><path d="M47.500 24.500C55 29 57 40 52 46C50 49 46 50.500 43 51"/></g>
<g fill="none" stroke="#a5d468" stroke-width="1.200" stroke-dasharray="1.500 1.500"><path d="M31 25C23.500 30 22 40 27.500 46.500"/><path d="M48.500 25C55.500 30 57 40 51.500 46.500"/></g>
<path d="M34.500 26C35 22.500 38 21 39.500 21.500C42 21 45 24 46 26.500Z" fill="#c9a23a"/>
<path d="M29.800 27C33 27.500 36 26.800 39 25.500C42 26.800 45 27.500 48.300 27C48.300 33 49 40 46.500 44.500C44.500 47.500 41.500 48.500 39 49.500C36.500 48.500 33.500 47.500 31.500 44.500C29 40 29.800 33 29.800 27Z" fill="#1f6fc2" stroke="#e0b84c" stroke-width=".800"/>
<ellipse cx="39" cy="36.700" rx="6" ry="9" fill="#5aa6dc" stroke="#efe3b0" stroke-width="1.100"/>
<path d="M33.800 39C36 38 39 39.500 44.400 40.500C43.500 44 41.500 45.500 39 45.700C36.500 45.500 34.500 43 33.800 39Z" fill="#2a6ec0"/>
<path d="M37 38.500C39 40.500 41 42.500 44 42C43 40 41 38.500 37 38.500Z" fill="#e0c040"/>
<circle cx="39.300" cy="33.400" r="2" fill="#f2d640"/>
<path d="M24.500 50.200C30 52 35 52.400 38.500 51.500C42 52.400 47 52 52.500 50.200L52 53C47 54.500 42 54.600 38.500 53.800C35 54.600 30 54.500 25 53Z" fill="#4b9bdb"/>
<path d="M34 54.500L37 52.500M43 54.500L40 52.500" stroke="#7cba3c" stroke-width="1.400"/>
<text x="38.500" y="60.800" font-family="'Liberation Sans',sans-serif" font-size="1.900" fill="#5a7fc4" text-anchor="middle" textLength="26">GOVERNO DO ESTADO</text>
<text x="38.300" y="71.300" font-family="'Liberation Sans',sans-serif" font-weight="bold" font-size="11.400" fill="#2b3b9b" text-anchor="middle" textLength="57" lengthAdjust="spacingAndGlyphs">PERNAMBUCO</text>
</svg></div><div class="mic" style="right:7.5px"><svg width="18.2" height="18.2" viewBox="0 0 24 24"><path fill="#fff" d="M19 11h-1.7c0 .74-.16 1.43-.43 2.05l1.23 1.23c.56-.98.9-2.09.9-3.28zm-4.02.17c0-.06.02-.11.02-.17V5c0-1.66-1.34-3-3-3S9 3.34 9 5v.18l5.98 5.99zM4.27 3L3 4.27l6.01 6.01V11c0 1.66 1.33 3 2.99 3 .22 0 .44-.03.65-.08l1.66 1.66c-.71.33-1.5.52-2.31.52-2.76 0-5.3-2.1-5.3-5.1H5c0 3.41 2.72 6.23 6 6.72V21h2v-3.28c.91-.13 1.77-.45 2.54-.9L19.73 21 21 19.73 4.27 3z"/></svg></div><div class="nm med" style="letter-spacing:0.741px">GEPMC Equipe Estadual</div></div>
<div class="tile c2" style="left:1656px;top:448px"><div class="avt"><svg width="75" height="75" viewBox="0 0 75 75"><defs><filter id="fb" x="-20%" y="-20%" width="140%" height="140%"><feGaussianBlur stdDeviation=".900"/></filter><linearGradient id="fs" x1="0" y1="0" x2="0" y2="1"><stop offset="0" stop-color="#a5e2ea"/><stop offset=".28" stop-color="#8cdde0"/><stop offset=".45" stop-color="#55c4c4"/><stop offset=".7" stop-color="#86d8d4"/><stop offset="1" stop-color="#6cc8b0"/></linearGradient></defs>
<g filter="url(#fb)"><rect x="-3" y="-3" width="81" height="81" fill="url(#fs)"/>
<path d="M-3 20C4 14 10 10 16 8C20 14 24 22 26 34C28 40 28 44 30 48C34 46 38 44 40 43L36 58L30 78H-3Z" fill="#3f8a3c"/>
<path d="M12 10C18 12 26 14 36 12C30 18 26 24 24 32C20 24 16 16 12 10Z" fill="#7fbf8a" opacity=".8"/>
<path d="M6 16C10 24 12 34 10 44M14 12C18 22 20 32 18 42" stroke="#2f6f30" stroke-width="2.500" fill="none"/>
<path d="M-3 40C8 42 20 48 30 56L30 78H-3Z" fill="#56a040"/>
<path d="M4 50C10 52 16 56 22 62" stroke="#2f7030" stroke-width="3" fill="none"/>
<circle cx="10" cy="38" r="1.600" fill="#e06070"/><circle cx="15" cy="63" r="2" fill="#d84838"/><circle cx="27" cy="60" r="1.500" fill="#d84838"/>
<path d="M28 56C32 52 36 50 40 49L40 60L30 62Z" fill="#3f7f5a"/>
<!-- roof -->
<path d="M8 14L22 2L44 -3L66 10L62 12L48 8L38 9L28 6Z" fill="#17131a"/>
<rect x="42.500" y="6" width="6.500" height="18" fill="#3a1a1c"/>
<!-- hair -->
<path d="M41 30C42 20 50 16 56 17.500C63 19 66 27 66.500 34C67 40 66 43 68 46L56 50L44 52C42 58 40 64 37 68C34 62 36 54 38 48C39 42 40 36 41 30Z" fill="#16121a"/>
<!-- skin -->
<path d="M36 46C32 52 30 62 27 73L36 78L40 60Z" fill="#a4664a"/>
<path d="M47 44L62 42L70 46C72 50 71 56 69 60L60 52L46 54Z" fill="#a4664a"/>
<path d="M45 42H64V57H45Z" fill="#a4664a"/><ellipse cx="52" cy="32" rx="7.800" ry="10" fill="#9a5c40"/>
<ellipse cx="52" cy="28" rx="6" ry="4" fill="#b07050" opacity=".7"/>
<path d="M48.500 37.500C51 39.500 54.500 39.500 56.500 37C55 40.500 50 41 48.500 37.500Z" fill="#f0e6e0"/>
<path d="M47 31H50M54 30.500H57" stroke="#3a2018" stroke-width="1.200"/>
<!-- dress -->
<path d="M44 53C48 56 56 56 62 52L66 45L70 46C69 56 66 66 62 78H38C38 70 40 60 44 53Z" fill="#ee5b48"/>
<path d="M36 70C37 74 37 76 37 78H34Z" fill="#7ab848"/>
</g></svg></div><div class="mic" style="right:8px"><svg width="18.2" height="18.2" viewBox="0 0 24 24"><path fill="#fff" d="M19 11h-1.7c0 .74-.16 1.43-.43 2.05l1.23 1.23c.56-.98.9-2.09.9-3.28zm-4.02.17c0-.06.02-.11.02-.17V5c0-1.66-1.34-3-3-3S9 3.34 9 5v.18l5.98 5.99zM4.27 3L3 4.27l6.01 6.01V11c0 1.66 1.33 3 2.99 3 .22 0 .44-.03.65-.08l1.66 1.66c-.71.33-1.5.52-2.31.52-2.76 0-5.3-2.1-5.3-5.1H5c0 3.41 2.72 6.23 6 6.72V21h2v-3.28c.91-.13 1.77-.45 2.54-.9L19.73 21 21 19.73 4.27 3z"/></svg></div><div class="nm med" style="letter-spacing:0.828px">Fátima Ferreira</div></div>
<div class="tile" style="left:1395px;top:636px"><div class="avt"><svg width="75" height="75" viewBox="0 0 75 75" style="filter:blur(.35px)"><rect width="75" height="75" fill="#fff"/>
<g font-family="'Liberation Sans',sans-serif" font-weight="bold" fill="#3c50b4" text-anchor="middle"><text x="37.500" y="4.500" font-size="4.400">Secretaria de Desenvolvimento</text><text x="37.500" y="9.800" font-size="4.400">Social, Criança e Juventude</text></g>
<rect x="19" y="14.600" width="40" height=".900" fill="#9cc6e6"/>
<g fill="none" stroke="#7cba3c" stroke-width="3.200" stroke-linecap="round"><path d="M32 24.500C24 29 22 40 27 46C29 49 32 50.500 35 51"/><path d="M47.500 24.500C55 29 57 40 52 46C50 49 46 50.500 43 51"/></g>
<g fill="none" stroke="#a5d468" stroke-width="1.200" stroke-dasharray="1.500 1.500"><path d="M31 25C23.500 30 22 40 27.500 46.500"/><path d="M48.500 25C55.500 30 57 40 51.500 46.500"/></g>
<path d="M34.500 26C35 22.500 38 21 39.500 21.500C42 21 45 24 46 26.500Z" fill="#c9a23a"/>
<path d="M29.800 27C33 27.500 36 26.800 39 25.500C42 26.800 45 27.500 48.300 27C48.300 33 49 40 46.500 44.500C44.500 47.500 41.500 48.500 39 49.500C36.500 48.500 33.500 47.500 31.500 44.500C29 40 29.800 33 29.800 27Z" fill="#1f6fc2" stroke="#e0b84c" stroke-width=".800"/>
<ellipse cx="39" cy="36.700" rx="6" ry="9" fill="#5aa6dc" stroke="#efe3b0" stroke-width="1.100"/>
<path d="M33.800 39C36 38 39 39.500 44.400 40.500C43.500 44 41.500 45.500 39 45.700C36.500 45.500 34.500 43 33.800 39Z" fill="#2a6ec0"/>
<path d="M37 38.500C39 40.500 41 42.500 44 42C43 40 41 38.500 37 38.500Z" fill="#e0c040"/>
<circle cx="39.300" cy="33.400" r="2" fill="#f2d640"/>
<path d="M24.500 50.200C30 52 35 52.400 38.500 51.500C42 52.400 47 52 52.500 50.200L52 53C47 54.500 42 54.600 38.500 53.800C35 54.600 30 54.500 25 53Z" fill="#4b9bdb"/>
<path d="M34 54.500L37 52.500M43 54.500L40 52.500" stroke="#7cba3c" stroke-width="1.400"/>
<text x="38.500" y="60.800" font-family="'Liberation Sans',sans-serif" font-size="1.900" fill="#5a7fc4" text-anchor="middle" textLength="26">GOVERNO DO ESTADO</text>
<text x="38.300" y="71.300" font-family="'Liberation Sans',sans-serif" font-weight="bold" font-size="11.400" fill="#2b3b9b" text-anchor="middle" textLength="57" lengthAdjust="spacingAndGlyphs">PERNAMBUCO</text>
</svg></div><div class="mic" style="right:7.5px"><svg width="18.2" height="18.2" viewBox="0 0 24 24"><path fill="#fff" d="M19 11h-1.7c0 .74-.16 1.43-.43 2.05l1.23 1.23c.56-.98.9-2.09.9-3.28zm-4.02.17c0-.06.02-.11.02-.17V5c0-1.66-1.34-3-3-3S9 3.34 9 5v.18l5.98 5.99zM4.27 3L3 4.27l6.01 6.01V11c0 1.66 1.33 3 2.99 3 .22 0 .44-.03.65-.08l1.66 1.66c-.71.33-1.5.52-2.31.52-2.76 0-5.3-2.1-5.3-5.1H5c0 3.41 2.72 6.23 6 6.72V21h2v-3.28c.91-.13 1.77-.45 2.54-.9L19.73 21 21 19.73 4.27 3z"/></svg></div><div class="nm med" style="letter-spacing:0.741px">GEPMC Equipe Estadual</div></div>
<div class="tile c2" style="left:1656px;top:636px"><div class="avt"><svg width="75" height="75" viewBox="0 0 75 75"><defs><filter id="gb" x="-20%" y="-20%" width="140%" height="140%"><feGaussianBlur stdDeviation="1"/></filter><filter id="gb3" x="-40%" y="-40%" width="180%" height="180%"><feGaussianBlur stdDeviation="3"/></filter></defs>
<g filter="url(#gb)"><rect x="-3" y="-3" width="81" height="81" fill="#8e8e8e"/>
<path d="M-3 14L14 6L26 18L20 40L16 66L-3 60Z" fill="#e4e4e4"/>
<ellipse cx="14" cy="26" rx="12" ry="16" fill="#fafafa" filter="url(#gb3)"/>
<path d="M-3 40C4 44 10 52 14 62L6 64L-3 56Z" fill="#9a9a9a"/>
<path d="M36 -3H78V56L62 56C58 52 56 34 54 22C50 12 44 4 36 -3Z" fill="#1f1f1f"/>
<path d="M62 30C68 26 74 28 78 32V56H64Z" fill="#2c2c2c"/>
<!-- hair light -->
<path d="M20 30C22 18 32 8 44 9C52 10 56 18 57 28C52 22 44 20 36 22C28 24 24 28 20 30Z" fill="#a9a9a9"/>
<path d="M24 24C30 16 38 12 46 12" stroke="#d0d0d0" stroke-width="2" fill="none"/>
<path d="M17 34C18 44 18 56 22 64L28 58L22 34Z" fill="#b8b8b8"/>
<!-- dark hair right -->
<path d="M50 14C56 20 58 30 57 40C56 50 54 58 50 64L46 56C50 48 52 36 50 26Z" fill="#262626"/>
<!-- face -->
<path d="M22 32C24 24 34 20 42 22C50 24 54 32 53 42C52 52 46 58 38 59C30 60 24 54 22 46C21 42 21 36 22 32Z" fill="#c6c6c6"/>
<ellipse cx="33" cy="50" rx="8" ry="6" fill="#dadada" opacity=".8"/>
<!-- neck/shoulders -->
<path d="M24 58C30 62 42 62 48 58L52 66L60 70L56 78H14L18 68Z" fill="#9c9c9c"/>
<path d="M54 58C60 54 68 54 74 58L70 70L58 76L50 66Z" fill="#b4b4b4"/>
<path d="M48 58C50 62 50 66 46 70" stroke="#222" stroke-width="2.500" fill="none"/>
<!-- glasses -->
<circle cx="29.500" cy="30" r="4.800" fill="#d6d6d6" stroke="#2a2a2a" stroke-width="1.800"/>
<circle cx="46" cy="32.500" r="5.800" fill="#cfcfcf" stroke="#222" stroke-width="2.200"/>
<path d="M34 29C36 28 38 28.500 40.500 30" stroke="#222" stroke-width="1.800" fill="none"/>
<path d="M27 30.500H32M43 33H49" stroke="#777" stroke-width="1.200"/>
<!-- mouth -->
<path d="M28 43.500C32 45 38 46 43 45C41 49 32 49 28 43.500Z" fill="#3a3a3a"/>
<path d="M29.500 44.500C33 45.500 38 46 41.500 45.500C39 47.500 33 47.500 29.500 44.500Z" fill="#f2f2f2"/>
</g></svg></div><div class="mic" style="right:8px"><svg width="18.2" height="18.2" viewBox="0 0 24 24"><path fill="#fff" d="M19 11h-1.7c0 .74-.16 1.43-.43 2.05l1.23 1.23c.56-.98.9-2.09.9-3.28zm-4.02.17c0-.06.02-.11.02-.17V5c0-1.66-1.34-3-3-3S9 3.34 9 5v.18l5.98 5.99zM4.27 3L3 4.27l6.01 6.01V11c0 1.66 1.33 3 2.99 3 .22 0 .44-.03.65-.08l1.66 1.66c-.71.33-1.5.52-2.31.52-2.76 0-5.3-2.1-5.3-5.1H5c0 3.41 2.72 6.23 6 6.72V21h2v-3.28c.91-.13 1.77-.45 2.54-.9L19.73 21 21 19.73 4.27 3z"/></svg></div><div class="nm med" style="letter-spacing:0.768px">Cibele Flavia Lopes</div></div>
<div class="tile" style="left:1395px;top:824px"><div class="avt"><svg width="75" height="75" viewBox="0 0 75 75" style="filter:blur(.4px)"><rect width="75" height="75" fill="#fff"/>
<circle cx="37.500" cy="37.500" r="30" fill="none" stroke="#efefef" stroke-width="1"/>
<path d="M23.2 10.3L30.8 10.8L31.9 12.8L24.4 12.4Z" fill="#2f9a3c"/>
<path d="M24.4 12.4L31.9 12.8L33.0 14.9L25.6 14.4Z" fill="#f0d030"/>
<path d="M34.3 10.3L41.9 10.8L43.0 12.8L35.5 12.4Z" fill="#d8343c"/>
<path d="M35.5 12.4L43.0 12.8L44.1 14.9L36.7 14.4Z" fill="#f4f4f4"/>
<path d="M39.5 10.9L47.1 11.4L48.2 13.4L40.7 13.0Z" fill="#3a8fd0"/>
<path d="M40.7 13.0L48.2 13.4L49.3 15.5L41.9 15.0Z" fill="#f4f4f4"/>
<path d="M13.6 16.3L21.2 16.8L22.3 18.9L14.8 18.4Z" fill="#3aa03c"/>
<path d="M14.8 18.4L22.3 18.9L23.4 20.9L16.0 20.4Z" fill="#e8d820"/>
<path d="M28.4 15.9L36.0 16.4L37.1 18.4L29.6 18.0Z" fill="#f0f0f0"/>
<path d="M29.6 18.0L37.1 18.4L38.2 20.5L30.8 20.0Z" fill="#e04850"/>
<path d="M44.0 16.7L51.6 17.2L52.7 19.2L45.2 18.8Z" fill="#2f9a3c"/>
<path d="M45.2 18.8L52.7 19.2L53.8 21.3L46.4 20.8Z" fill="#e8f0e8"/>
<path d="M8.0 22.6L15.6 23.1L16.7 25.1L9.2 24.7Z" fill="#f2f2f2"/>
<path d="M9.2 24.7L16.7 25.1L17.8 27.2L10.4 26.7Z" fill="#58b050"/>
<path d="M19.5 21.8L27.1 22.3L28.2 24.4L20.7 23.9Z" fill="#202020"/>
<path d="M20.7 23.9L28.2 24.4L29.3 26.4L21.9 25.9Z" fill="#d8303a"/>
<path d="M33.6 20.7L41.2 21.2L42.3 23.2L34.8 22.8Z" fill="#3a9ae0"/>
<path d="M34.8 22.8L42.3 23.2L43.4 25.3L36.0 24.8Z" fill="#e85060"/>
<path d="M47.0 22.9L54.6 23.4L55.7 25.4L48.2 25.0Z" fill="#f0d020"/>
<path d="M48.2 25.0L55.7 25.4L56.8 27.5L49.4 27.0Z" fill="#4aa840"/>
<path d="M61.0 25.2L68.6 25.7L69.7 27.8L62.2 27.3Z" fill="#3a9ae0"/>
<path d="M62.2 27.3L69.7 27.8L70.8 29.8L63.4 29.3Z" fill="#a8c830"/>
<path d="M4.7 29.3L12.3 29.8L13.4 31.9L5.9 31.4Z" fill="#3a9ae0"/>
<path d="M5.9 31.4L13.4 31.9L14.5 33.9L7.1 33.4Z" fill="#6ab840"/>
<path d="M16.5 29.3L24.1 29.8L25.2 31.9L17.7 31.4Z" fill="#2a70c0"/>
<path d="M17.7 31.4L25.2 31.9L26.3 33.9L18.9 33.4Z" fill="#58b050"/>
<path d="M49.2 29.6L56.8 30.1L57.9 32.1L50.4 31.7Z" fill="#3040a0"/>
<path d="M50.4 31.7L57.9 32.1L59.0 34.2L51.6 33.7Z" fill="#e86070"/>
<path d="M61.8 31.8L69.4 32.3L70.5 34.4L63.0 33.9Z" fill="#58b0a0"/>
<path d="M63.0 33.9L70.5 34.4L71.6 36.4L64.2 35.9Z" fill="#e8d020"/>
<path d="M6.9 35.2L14.5 35.7L15.6 37.8L8.1 37.3Z" fill="#f0f0f0"/>
<path d="M8.1 37.3L15.6 37.8L16.7 39.8L9.3 39.3Z" fill="#e05040"/>
<path d="M18.8 35.6L26.4 36.1L27.5 38.1L20.0 37.7Z" fill="#38a048"/>
<path d="M20.0 37.7L27.5 38.1L28.6 40.2L21.2 39.7Z" fill="#38a0e0"/>
<path d="M16.5 47.5L24.1 48.0L25.2 50.0L17.7 49.6Z" fill="#f4f4f4"/>
<path d="M17.7 49.6L25.2 50.0L26.3 52.1L18.9 51.6Z" fill="#e04048"/>
<path d="M31.4 47.7L39.0 48.2L40.1 50.2L32.6 49.8Z" fill="#e03840"/>
<path d="M32.6 49.8L40.1 50.2L41.2 52.3L33.8 51.8Z" fill="#f0f0f0"/>
<path d="M45.5 47.5L53.1 48.0L54.2 50.0L46.7 49.6Z" fill="#2f9a3c"/>
<path d="M46.7 49.6L54.2 50.0L55.3 52.1L47.9 51.6Z" fill="#f0f0f0"/>
<path d="M58.1 48.0L65.7 48.5L66.8 50.5L59.3 50.1Z" fill="#d83840"/>
<path d="M59.3 50.1L66.8 50.5L67.9 52.6L60.5 52.1Z" fill="#58a840"/>
<path d="M22.5 52.6L30.1 53.1L31.2 55.1L23.7 54.7Z" fill="#38a048"/>
<path d="M23.7 54.7L31.2 55.1L32.3 57.2L24.9 56.7Z" fill="#e85030"/>
<path d="M34.3 52.6L41.9 53.1L43.0 55.1L35.5 54.7Z" fill="#38a0e0"/>
<path d="M35.5 54.7L43.0 55.1L44.1 57.2L36.7 56.7Z" fill="#c8d040"/>
<path d="M45.5 53.0L53.1 53.5L54.2 55.5L46.7 55.1Z" fill="#58b0e8"/>
<path d="M46.7 55.1L54.2 55.5L55.3 57.6L47.9 57.1Z" fill="#f08088"/>
<path d="M56.6 53.0L64.2 53.5L65.3 55.5L57.8 55.1Z" fill="#38a0e0"/>
<path d="M57.8 55.1L65.3 55.5L66.4 57.6L59.0 57.1Z" fill="#f0f0f0"/>
<path d="M26.2 58.9L33.8 59.4L34.9 61.5L27.4 61.0Z" fill="#2a80d0"/>
<path d="M27.4 61.0L34.9 61.5L36.0 63.5L28.6 63.0Z" fill="#a8c830"/>
<path d="M37.3 59.3L44.9 59.8L46.0 61.9L38.5 61.4Z" fill="#2a90d0"/>
<path d="M38.5 61.4L46.0 61.9L47.1 63.9L39.7 63.4Z" fill="#c8d830"/>
<path d="M48.5 59.3L56.1 59.8L57.2 61.9L49.7 61.4Z" fill="#2a90d0"/>
<path d="M49.7 61.4L57.2 61.9L58.3 63.9L50.9 63.4Z" fill="#f0a040"/>
<path d="M25.200 28.200L38.600 26.700L48.300 31.900L48.800 33.600L31.800 35.800Z" fill="#1f50b8"/>
<path d="M31.800 35.800L48.800 33.600L49.200 35.200L33 37.400Z" fill="#f4f4f4"/>
<path d="M34 33.500C37 29.500 43 29 46.500 32.500" fill="none" stroke="#e8c030" stroke-width="1.100"/><path d="M35.500 34C38 31 42 30.800 45 33.400" fill="none" stroke="#48a848" stroke-width=".900"/>
<path d="M41 33.800L41.600 36.300" stroke="#d83030" stroke-width=".900"/>
<circle cx="40" cy="31" r=".900" fill="#f0d030"/>
<defs><linearGradient id="sg" x1="0" y1="0" x2="1" y2="0"><stop offset="0" stop-color="#8cc043"/><stop offset=".55" stop-color="#57a866"/><stop offset=".8" stop-color="#3f8a90"/><stop offset="1" stop-color="#3a62a8"/></linearGradient></defs>
<text x="3.300" y="46.600" font-family="'Liberation Sans',sans-serif" font-weight="bold" font-size="6" fill="#f39a3c" stroke="#f39a3c" stroke-width=".45" textLength="28.200" lengthAdjust="spacingAndGlyphs">Capacita</text>
<text x="31.800" y="46.800" font-family="'Liberation Sans',sans-serif" font-weight="bold" font-size="8.400" fill="url(#sg)" stroke="url(#sg)" stroke-width=".5" textLength="41.800" lengthAdjust="spacingAndGlyphs">SUAS/PE</text>
</svg></div><div class="mic" style="right:7.5px"><svg width="18.2" height="18.2" viewBox="0 0 24 24"><path fill="#fff" d="M19 11h-1.7c0 .74-.16 1.43-.43 2.05l1.23 1.23c.56-.98.9-2.09.9-3.28zm-4.02.17c0-.06.02-.11.02-.17V5c0-1.66-1.34-3-3-3S9 3.34 9 5v.18l5.98 5.99zM4.27 3L3 4.27l6.01 6.01V11c0 1.66 1.33 3 2.99 3 .22 0 .44-.03.65-.08l1.66 1.66c-.71.33-1.5.52-2.31.52-2.76 0-5.3-2.1-5.3-5.1H5c0 3.41 2.72 6.23 6 6.72V21h2v-3.28c.91-.13 1.77-.45 2.54-.9L19.73 21 21 19.73 4.27 3z"/></svg></div><div class="nm med" style="letter-spacing:0.752px">Capacita Suas</div></div>
<div class="tile c2" style="left:1656px;top:824px"><div class="avt"><svg width="75" height="75" viewBox="0 0 75 75" style="filter:blur(.4px)"><rect width="75" height="75" fill="#fff"/>
<circle cx="37.500" cy="37.500" r="30" fill="none" stroke="#efefef" stroke-width="1"/>
<path d="M23.2 10.3L30.8 10.8L31.9 12.8L24.4 12.4Z" fill="#2f9a3c"/>
<path d="M24.4 12.4L31.9 12.8L33.0 14.9L25.6 14.4Z" fill="#f0d030"/>
<path d="M34.3 10.3L41.9 10.8L43.0 12.8L35.5 12.4Z" fill="#d8343c"/>
<path d="M35.5 12.4L43.0 12.8L44.1 14.9L36.7 14.4Z" fill="#f4f4f4"/>
<path d="M39.5 10.9L47.1 11.4L48.2 13.4L40.7 13.0Z" fill="#3a8fd0"/>
<path d="M40.7 13.0L48.2 13.4L49.3 15.5L41.9 15.0Z" fill="#f4f4f4"/>
<path d="M13.6 16.3L21.2 16.8L22.3 18.9L14.8 18.4Z" fill="#3aa03c"/>
<path d="M14.8 18.4L22.3 18.9L23.4 20.9L16.0 20.4Z" fill="#e8d820"/>
<path d="M28.4 15.9L36.0 16.4L37.1 18.4L29.6 18.0Z" fill="#f0f0f0"/>
<path d="M29.6 18.0L37.1 18.4L38.2 20.5L30.8 20.0Z" fill="#e04850"/>
<path d="M44.0 16.7L51.6 17.2L52.7 19.2L45.2 18.8Z" fill="#2f9a3c"/>
<path d="M45.2 18.8L52.7 19.2L53.8 21.3L46.4 20.8Z" fill="#e8f0e8"/>
<path d="M8.0 22.6L15.6 23.1L16.7 25.1L9.2 24.7Z" fill="#f2f2f2"/>
<path d="M9.2 24.7L16.7 25.1L17.8 27.2L10.4 26.7Z" fill="#58b050"/>
<path d="M19.5 21.8L27.1 22.3L28.2 24.4L20.7 23.9Z" fill="#202020"/>
<path d="M20.7 23.9L28.2 24.4L29.3 26.4L21.9 25.9Z" fill="#d8303a"/>
<path d="M33.6 20.7L41.2 21.2L42.3 23.2L34.8 22.8Z" fill="#3a9ae0"/>
<path d="M34.8 22.8L42.3 23.2L43.4 25.3L36.0 24.8Z" fill="#e85060"/>
<path d="M47.0 22.9L54.6 23.4L55.7 25.4L48.2 25.0Z" fill="#f0d020"/>
<path d="M48.2 25.0L55.7 25.4L56.8 27.5L49.4 27.0Z" fill="#4aa840"/>
<path d="M61.0 25.2L68.6 25.7L69.7 27.8L62.2 27.3Z" fill="#3a9ae0"/>
<path d="M62.2 27.3L69.7 27.8L70.8 29.8L63.4 29.3Z" fill="#a8c830"/>
<path d="M4.7 29.3L12.3 29.8L13.4 31.9L5.9 31.4Z" fill="#3a9ae0"/>
<path d="M5.9 31.4L13.4 31.9L14.5 33.9L7.1 33.4Z" fill="#6ab840"/>
<path d="M16.5 29.3L24.1 29.8L25.2 31.9L17.7 31.4Z" fill="#2a70c0"/>
<path d="M17.7 31.4L25.2 31.9L26.3 33.9L18.9 33.4Z" fill="#58b050"/>
<path d="M49.2 29.6L56.8 30.1L57.9 32.1L50.4 31.7Z" fill="#3040a0"/>
<path d="M50.4 31.7L57.9 32.1L59.0 34.2L51.6 33.7Z" fill="#e86070"/>
<path d="M61.8 31.8L69.4 32.3L70.5 34.4L63.0 33.9Z" fill="#58b0a0"/>
<path d="M63.0 33.9L70.5 34.4L71.6 36.4L64.2 35.9Z" fill="#e8d020"/>
<path d="M6.9 35.2L14.5 35.7L15.6 37.8L8.1 37.3Z" fill="#f0f0f0"/>
<path d="M8.1 37.3L15.6 37.8L16.7 39.8L9.3 39.3Z" fill="#e05040"/>
<path d="M18.8 35.6L26.4 36.1L27.5 38.1L20.0 37.7Z" fill="#38a048"/>
<path d="M20.0 37.7L27.5 38.1L28.6 40.2L21.2 39.7Z" fill="#38a0e0"/>
<path d="M16.5 47.5L24.1 48.0L25.2 50.0L17.7 49.6Z" fill="#f4f4f4"/>
<path d="M17.7 49.6L25.2 50.0L26.3 52.1L18.9 51.6Z" fill="#e04048"/>
<path d="M31.4 47.7L39.0 48.2L40.1 50.2L32.6 49.8Z" fill="#e03840"/>
<path d="M32.6 49.8L40.1 50.2L41.2 52.3L33.8 51.8Z" fill="#f0f0f0"/>
<path d="M45.5 47.5L53.1 48.0L54.2 50.0L46.7 49.6Z" fill="#2f9a3c"/>
<path d="M46.7 49.6L54.2 50.0L55.3 52.1L47.9 51.6Z" fill="#f0f0f0"/>
<path d="M58.1 48.0L65.7 48.5L66.8 50.5L59.3 50.1Z" fill="#d83840"/>
<path d="M59.3 50.1L66.8 50.5L67.9 52.6L60.5 52.1Z" fill="#58a840"/>
<path d="M22.5 52.6L30.1 53.1L31.2 55.1L23.7 54.7Z" fill="#38a048"/>
<path d="M23.7 54.7L31.2 55.1L32.3 57.2L24.9 56.7Z" fill="#e85030"/>
<path d="M34.3 52.6L41.9 53.1L43.0 55.1L35.5 54.7Z" fill="#38a0e0"/>
<path d="M35.5 54.7L43.0 55.1L44.1 57.2L36.7 56.7Z" fill="#c8d040"/>
<path d="M45.5 53.0L53.1 53.5L54.2 55.5L46.7 55.1Z" fill="#58b0e8"/>
<path d="M46.7 55.1L54.2 55.5L55.3 57.6L47.9 57.1Z" fill="#f08088"/>
<path d="M56.6 53.0L64.2 53.5L65.3 55.5L57.8 55.1Z" fill="#38a0e0"/>
<path d="M57.8 55.1L65.3 55.5L66.4 57.6L59.0 57.1Z" fill="#f0f0f0"/>
<path d="M26.2 58.9L33.8 59.4L34.9 61.5L27.4 61.0Z" fill="#2a80d0"/>
<path d="M27.4 61.0L34.9 61.5L36.0 63.5L28.6 63.0Z" fill="#a8c830"/>
<path d="M37.3 59.3L44.9 59.8L46.0 61.9L38.5 61.4Z" fill="#2a90d0"/>
<path d="M38.5 61.4L46.0 61.9L47.1 63.9L39.7 63.4Z" fill="#c8d830"/>
<path d="M48.5 59.3L56.1 59.8L57.2 61.9L49.7 61.4Z" fill="#2a90d0"/>
<path d="M49.7 61.4L57.2 61.9L58.3 63.9L50.9 63.4Z" fill="#f0a040"/>
<path d="M25.200 28.200L38.600 26.700L48.300 31.900L48.800 33.600L31.800 35.800Z" fill="#1f50b8"/>
<path d="M31.800 35.800L48.800 33.600L49.200 35.200L33 37.400Z" fill="#f4f4f4"/>
<path d="M34 33.500C37 29.500 43 29 46.500 32.500" fill="none" stroke="#e8c030" stroke-width="1.100"/><path d="M35.500 34C38 31 42 30.800 45 33.400" fill="none" stroke="#48a848" stroke-width=".900"/>
<path d="M41 33.800L41.600 36.300" stroke="#d83030" stroke-width=".900"/>
<circle cx="40" cy="31" r=".900" fill="#f0d030"/>
<defs><linearGradient id="sg" x1="0" y1="0" x2="1" y2="0"><stop offset="0" stop-color="#8cc043"/><stop offset=".55" stop-color="#57a866"/><stop offset=".8" stop-color="#3f8a90"/><stop offset="1" stop-color="#3a62a8"/></linearGradient></defs>
<text x="3.300" y="46.600" font-family="'Liberation Sans',sans-serif" font-weight="bold" font-size="6" fill="#f39a3c" stroke="#f39a3c" stroke-width=".45" textLength="28.200" lengthAdjust="spacingAndGlyphs">Capacita</text>
<text x="31.800" y="46.800" font-family="'Liberation Sans',sans-serif" font-weight="bold" font-size="8.400" fill="url(#sg)" stroke="url(#sg)" stroke-width=".5" textLength="41.800" lengthAdjust="spacingAndGlyphs">SUAS/PE</text>
</svg></div><div class="mic" style="right:8px"><svg width="18.2" height="18.2" viewBox="0 0 24 24"><path fill="#fff" d="M19 11h-1.7c0 .74-.16 1.43-.43 2.05l1.23 1.23c.56-.98.9-2.09.9-3.28zm-4.02.17c0-.06.02-.11.02-.17V5c0-1.66-1.34-3-3-3S9 3.34 9 5v.18l5.98 5.99zM4.27 3L3 4.27l6.01 6.01V11c0 1.66 1.33 3 2.99 3 .22 0 .44-.03.65-.08l1.66 1.66c-.71.33-1.5.52-2.31.52-2.76 0-5.3-2.1-5.3-5.1H5c0 3.41 2.72 6.23 6 6.72V21h2v-3.28c.91-.13 1.77-.45 2.54-.9L19.73 21 21 19.73 4.27 3z"/></svg></div><div class="nm med" style="letter-spacing:1.4px">Você</div></div>

<!-- BOTTOM BAR -->
<div id="clock" class="abs med" style="letter-spacing:-0.222px">15:51</div>
<div id="sep" class="abs"></div>
<div id="title" class="abs med" style="letter-spacing:0.651px">Turma 32 - 11º Encontro de Supervisão Técnica / SE...</div>
<div class="cb red" style="left:799px"><svg style="left:10px;top:10px" width="20" height="20" viewBox="0 0 24 24"><path fill="#fff" d="M19 11h-1.700c0 .74-.16 1.430-.43 2.050l1.230 1.230c.56-.98.9-2.090.9-3.280zm-4.020.17c0-.06.02-.11.02-.17V5c0-1.660-1.340-3-3-3S9 3.340 9 5v.18l5.980 5.990zM4.270 3L3 4.270l6.010 6.010V11c0 1.660 1.330 3 2.990 3 .22 0 .44-.03.65-.08l1.660 1.660c-.71.33-1.500.52-2.310.52-2.760 0-5.300-2.100-5.300-5.100H5c0 3.410 2.720 6.230 6 6.720V21h2v-3.280c.91-.13 1.770-.45 2.540-.9L19.730 21 21 19.730 4.270 3z"/></svg></div>
<div class="abs" style="left:825px;top:1040px;width:20px;height:20px;border-radius:50%;background:#d92b2b;border:1px solid #e9605a"><svg class="abs" style="left:0;top:0" width="18" height="18" viewBox="0 0 18 18"><rect x="7.7" y="4.1" width="2.6" height="6.6" fill="#fff"/><rect x="7.7" y="12.2" width="2.6" height="2.1" fill="#fff"/></svg></div>
<div class="cb red" style="left:851px"><svg style="left:0;top:0" width="40" height="40" viewBox="0 0 40 40"><path d="M17 13.9h5.600a1 1 0 0 1 1 1v9.900a1 1 0 0 1-1 1h-8.900a1 1 0 0 1-1-1v-9.400" fill="none" stroke="#fff" stroke-width="1.700"/><path d="M24 20.200l4.500-4.400v8.800z" fill="#fff"/><path d="M13.200 11.400l15.800 15.300" stroke="#ea4335" stroke-width="1.800"/><path d="M11.600 13l15.800 15.300" stroke="#fff" stroke-width="1.700"/></svg></div>
<div class="cb" style="left:903px"><svg width="24" height="24" viewBox="0 0 24 24"><path fill="#fff" d="M21 7c0-1.380-1.120-2.500-2.500-2.500-.17 0-.34.02-.5.050V4c0-1.380-1.120-2.500-2.500-2.500-.23 0-.46.030-.67.090C14.460.66 13.560 0 12.500 0c-1.230 0-2.250.89-2.460 2.060C9.870 2.020 9.690 2 9.500 2 8.120 2 7 3.120 7 4.500v5.890c-.34-.31-.76-.54-1.220-.66L5.010 9.520c-.83-.23-1.700.09-2.190.83-.38.570-.4 1.310-.15 1.950l2.560 6.430C6.490 21.910 9.570 24 12.990 24c4.420 0 8.010-3.580 8.010-8V7zM19 16c0 3.310-2.690 6-6 6-2.610 0-4.950-1.590-5.910-4.010l-2.600-6.540.53.140c.46.120.83.460 1 .9L7 15h2V4.500c0-.28.220-.5.500-.5s.5.220.5.500V12h2V2.500c0-.28.220-.5.500-.5s.5.220.5.500V12h2V4c0-.28.220-.5.500-.5s.5.220.5.500v8h2V7c0-.28.220-.5.500-.5s.5.220.5.500v9z"/></svg></div>
<div class="cb" style="left:955px"><svg width="24" height="24" viewBox="0 0 24 24"><path fill="#fff" d="M21 3H3c-1.110 0-2 .89-2 2v14c0 1.110.89 2 2 2h18c1.110 0 2-.89 2-2V5c0-1.110-.89-2-2-2zm0 16.020H3V4.980h18v14.040zM10 12H8l4-4 4 4h-2v4h-4v-4z"/></svg></div>
<div class="cb" style="left:1007px"><svg width="24" height="24" viewBox="0 0 24 24"><circle cx="12" cy="6" r="2.200" fill="#fff"/><circle cx="12" cy="12" r="2.200" fill="#fff"/><circle cx="12" cy="18" r="2.200" fill="#fff"/></svg></div>
<div class="cb red" style="left:1059px;width:56px;border-radius:20px"><svg style="left:15.400px;top:7.400px" width="25.600" height="25.600" viewBox="0 0 24 24"><path fill="#fff" d="M12 9c-1.600 0-3.150.25-4.600.72v3.100c0 .39-.23.74-.56.900-.98.490-1.870 1.120-2.660 1.850-.18.180-.43.280-.7.280-.28 0-.53-.11-.71-.29L.29 13.080c-.18-.17-.29-.42-.29-.7 0-.28.110-.53.290-.71C3.340 8.780 7.460 7 12 7s8.660 1.780 11.710 4.670c.18.180.29.430.29.710 0 .28-.11.530-.29.710l-2.480 2.480c-.18.180-.43.290-.71.290-.27 0-.52-.11-.7-.28-.79-.74-1.690-1.360-2.670-1.850-.33-.16-.56-.5-.56-.9v-3.100C15.150 9.250 13.600 9 12 9z"/></svg></div>
<svg class="ri" style="left:1674px" viewBox="0 0 24 24"><path fill="#fff" d="M11 7h2v2h-2zm0 4h2v6h-2zm1-9C6.480 2 2 6.480 2 12s4.480 10 10 10 10-4.480 10-10S17.520 2 12 2zm0 18c-4.410 0-8-3.590-8-8s3.590-8 8-8 8 3.590 8 8-3.590 8-8 8z"/></svg>
<svg class="ri" style="left:1722px" viewBox="0 0 24 24"><path fill="#fff" d="M16.670 13.130C18.040 14.060 19 15.320 19 17v3h4v-3c0-2.180-3.570-3.470-6.330-3.870zM15 12c2.210 0 4-1.790 4-4s-1.790-4-4-4c-.47 0-.91.100-1.330.24C14.500 5.270 15 6.580 15 8s-.5 2.730-1.330 3.760c.42.140.86.240 1.330.24zM9 12c2.210 0 4-1.790 4-4s-1.790-4-4-4-4 1.790-4 4 1.790 4 4 4zm0-6c1.100 0 2 .9 2 2s-.9 2-2 2-2-.9-2-2 .9-2 2-2zm0 7c-2.670 0-8 1.340-8 4v3h16v-3c0-2.660-5.330-4-8-4zm6 5H3v-.99C3.200 16.290 6.300 15 9 15s5.800 1.290 6 2v1z"/></svg>
<div class="abs" style="left:1735px;top:1011px;width:20px;height:20px;border-radius:50%;background:#5f6368;font-size:11px;font-weight:bold;line-height:20px;text-align:center;letter-spacing:.2px">11</div>
<svg class="ri" style="left:1770px" viewBox="0 0 24 24"><path fill="#fff" d="M4 4h16v12H5.170L4 17.170V4m0-2c-1.100 0-1.990.9-1.990 2L2 22l4-4h14c1.100 0 2-.9 2-2V4c0-1.100-.9-2-2-2H4zm2 10h8v2H6v-2zm0-3h12v2H6V9zm0-3h12v2H6V6z"/></svg>
<svg class="ri" style="left:1818px" viewBox="0 0 24 24"><path fill="#fff" d="M12 2l-5.500 9h11L12 2zm0 3.840L13.930 9h-3.870L12 5.840zM17.500 13c-2.490 0-4.500 2.010-4.500 4.500s2.010 4.500 4.500 4.500 4.500-2.010 4.500-4.500-2.010-4.500-4.500-4.500zm0 7c-1.380 0-2.500-1.120-2.500-2.500s1.120-2.500 2.500-2.500 2.500 1.120 2.500 2.500-1.120 2.500-2.500 2.500zM3 21.500h8v-8H3v8zm2-6h4v4H5v-4z"/></svg>
<svg class="ri" style="left:1866px" viewBox="0 0 24 24"><path fill="#fff" d="M12 1L3 5v6c0 5.550 3.840 10.740 9 12 5.160-1.260 9-6.450 9-12V5l-9-4zm0 2.180l7 3.120v4.700c0 4.520-2.980 8.690-7 9.930-4.020-1.240-7-5.410-7-9.930V6.300l7-3.120z"/><path d="M9.800 10.400V9a2.200 2.200 0 0 1 4.400 0v.3" fill="none" stroke="#fff" stroke-width="1.500"/><path fill="#fff" fill-rule="evenodd" d="M9 10.200h6a1 1 0 0 1 1 1v5a1 1 0 0 1-1 1H9a1 1 0 0 1-1-1v-5a1 1 0 0 1 1-1zm3 2.400a1.100 1.100 0 1 0 0 2.200 1.100 1.100 0 0 0 0-2.200z"/></svg>

</body>
</html>
